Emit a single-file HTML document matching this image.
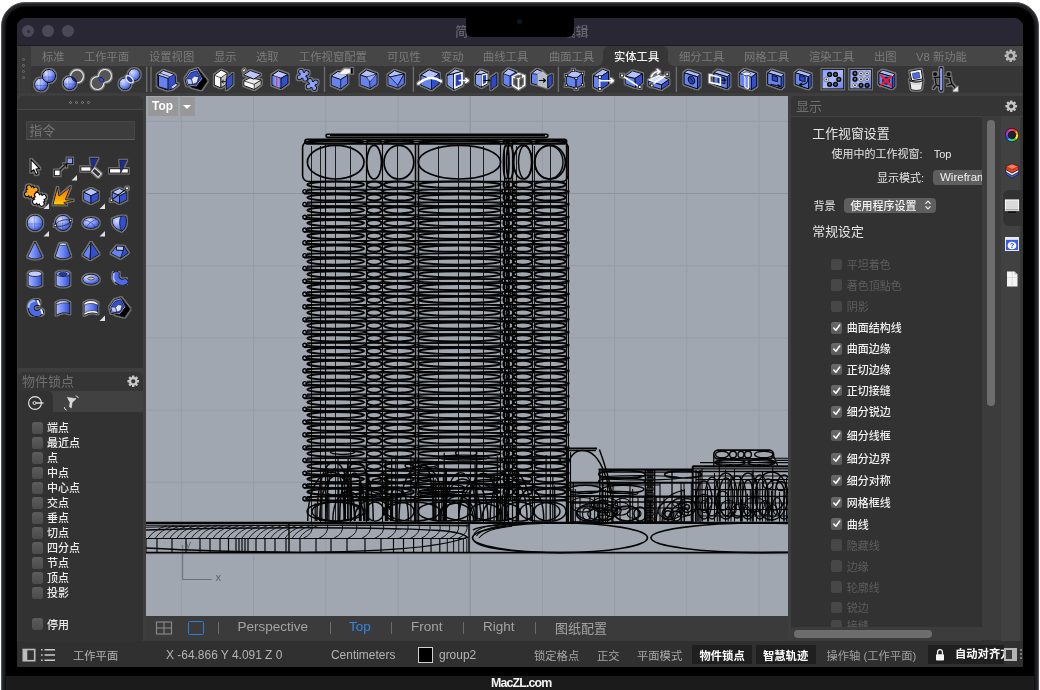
<!DOCTYPE html><html><head><meta charset="utf-8"><title>Rhino</title><style>
*{box-sizing:border-box}
html,body{margin:0;padding:0}
body{width:1040px;height:690px;background:#fff;position:relative;overflow:hidden;font-family:"Liberation Sans","Noto Sans CJK SC",sans-serif;}
.abs{position:absolute}
#bezel{position:absolute;left:1.4px;top:1.5px;width:1037.3px;height:720px;border-radius:24px;background:#000;border:1.2px solid #55565b;box-shadow:inset 0 0 0 1.3px #2c2d31,inset 0 0 0 3.6px #1b1c1f}
#chin{position:absolute;left:6px;top:675.8px;width:1027.6px;height:15px;background:#1b1b1b}
#screen{position:absolute;left:17px;top:18px;width:1006px;height:649px;border-radius:9px 9px 2px 2px;background:#3e3e3e;overflow:hidden;will-change:transform}
#screen .abs{position:absolute}
.t{position:absolute;white-space:nowrap;line-height:1}
</style></head><body><div id="bezel"></div><div id="chin"></div><div class="t" style="left:490.5px;top:675.5px;font-size:12.4px;line-height:14px;font-weight:bold;color:#f4f4f4;letter-spacing:-0.85px;will-change:transform">MacZL.com</div><div id="screen"><div class="abs " style="left:0px;top:0px;width:1006px;height:28px;background:#2a2735"></div>
<div class="abs " style="left:5px;top:7px;width:12px;height:12px;border-radius:50%;background:#4d4858"></div>
<div class="abs " style="left:25px;top:7px;width:12px;height:12px;border-radius:50%;background:#4d4858"></div>
<div class="abs " style="left:45px;top:7px;width:12px;height:12px;border-radius:50%;background:#4d4858"></div>
<div class="abs " style="left:9.5px;top:11.5px;width:3px;height:3px;border-radius:50%;background:#2f2b3a"></div>
<div class="t" style="left:438px;top:4.225px;font-size:13px;height:19.5px;line-height:19.5px;color:#66616f;font-weight:500">简</div>
<div class="t" style="left:545.6px;top:4.225px;font-size:13px;height:19.5px;line-height:19.5px;color:#66616f;font-weight:500">编辑</div>
<div class="abs " style="left:448.8px;top:0px;width:108.2px;height:18.9px;background:#000;border-radius:0 0 6px 6px"></div>
<div class="abs " style="left:499.5px;top:1px;width:5px;height:5px;border-radius:50%;background:#0c1626"></div>
<div class="abs " style="left:0px;top:28px;width:1006px;height:21px;background:#363636"></div>
<div class="abs " style="left:0px;top:28px;width:586px;height:20.2px;background:#464646;border-radius:0 0 6px 0"></div>
<div class="abs " style="left:651px;top:28px;width:355px;height:20.2px;background:#464646;border-radius:0 0 0 6px"></div>
<div class="abs " style="left:0px;top:48px;width:1006px;height:26.6px;background:#363636"></div>
<div class="abs " style="left:-1px;top:28px;width:14.5px;height:46.6px;background:#3a3a3a;border-radius:0 0 0 6px"></div>
<div class="abs " style="left:5.1px;top:40.1px;width:3px;height:3px;border-radius:50%;border:0.8px solid #747474"></div>
<div class="abs " style="left:5.1px;top:46.1px;width:3px;height:3px;border-radius:50%;border:0.8px solid #747474"></div>
<div class="abs " style="left:5.1px;top:52.1px;width:3px;height:3px;border-radius:50%;border:0.8px solid #747474"></div>
<div class="abs " style="left:5.1px;top:58.1px;width:3px;height:3px;border-radius:50%;border:0.8px solid #747474"></div>
<div class="abs " style="left:583px;top:28px;width:71px;height:6px;background:#464646"></div>
<div class="abs " style="left:586px;top:28.4px;width:65px;height:20px;background:#363636;border-radius:6px 6px 0 0"></div>
<div class="abs " style="left:0px;top:27.3px;width:1006px;height:1.2px;background:#1c1b22"></div>
<div class="t" style="left:25px;top:30.5725px;font-size:11.3px;height:16.95px;line-height:16.95px;color:#7b7b7b;">标准</div>
<div class="t" style="left:67px;top:30.5725px;font-size:11.3px;height:16.95px;line-height:16.95px;color:#7b7b7b;">工作平面</div>
<div class="t" style="left:132px;top:30.5725px;font-size:11.3px;height:16.95px;line-height:16.95px;color:#7b7b7b;">设置视图</div>
<div class="t" style="left:197px;top:30.5725px;font-size:11.3px;height:16.95px;line-height:16.95px;color:#7b7b7b;">显示</div>
<div class="t" style="left:239px;top:30.5725px;font-size:11.3px;height:16.95px;line-height:16.95px;color:#7b7b7b;">选取</div>
<div class="t" style="left:282px;top:30.5725px;font-size:11.3px;height:16.95px;line-height:16.95px;color:#7b7b7b;">工作视窗配置</div>
<div class="t" style="left:370px;top:30.5725px;font-size:11.3px;height:16.95px;line-height:16.95px;color:#7b7b7b;">可见性</div>
<div class="t" style="left:424px;top:30.5725px;font-size:11.3px;height:16.95px;line-height:16.95px;color:#7b7b7b;">变动</div>
<div class="t" style="left:466px;top:30.5725px;font-size:11.3px;height:16.95px;line-height:16.95px;color:#7b7b7b;">曲线工具</div>
<div class="t" style="left:532px;top:30.5725px;font-size:11.3px;height:16.95px;line-height:16.95px;color:#7b7b7b;">曲面工具</div>
<div class="t" style="left:597px;top:30.5725px;font-size:11.3px;height:16.95px;line-height:16.95px;color:#f2f2f2;font-weight:500;">实体工具</div>
<div class="t" style="left:662px;top:30.5725px;font-size:11.3px;height:16.95px;line-height:16.95px;color:#7b7b7b;">细分工具</div>
<div class="t" style="left:727px;top:30.5725px;font-size:11.3px;height:16.95px;line-height:16.95px;color:#7b7b7b;">网格工具</div>
<div class="t" style="left:792px;top:30.5725px;font-size:11.3px;height:16.95px;line-height:16.95px;color:#7b7b7b;">渲染工具</div>
<div class="t" style="left:857px;top:30.5725px;font-size:11.3px;height:16.95px;line-height:16.95px;color:#7b7b7b;">出图</div>
<div class="t" style="left:899px;top:30.5725px;font-size:11.3px;height:16.95px;line-height:16.95px;color:#7b7b7b;">V8 新功能</div>
<svg class="abs" style="left:985.75px;top:29.75px" width="15.5" height="15.5" viewBox="-10 -10 20 20"><rect x="-1.7" y="-8" width="3.4" height="4" rx=".6" fill="#b8b8b8" transform="rotate(0)"/><rect x="-1.7" y="-8" width="3.4" height="4" rx=".6" fill="#b8b8b8" transform="rotate(45)"/><rect x="-1.7" y="-8" width="3.4" height="4" rx=".6" fill="#b8b8b8" transform="rotate(90)"/><rect x="-1.7" y="-8" width="3.4" height="4" rx=".6" fill="#b8b8b8" transform="rotate(135)"/><rect x="-1.7" y="-8" width="3.4" height="4" rx=".6" fill="#b8b8b8" transform="rotate(180)"/><rect x="-1.7" y="-8" width="3.4" height="4" rx=".6" fill="#b8b8b8" transform="rotate(225)"/><rect x="-1.7" y="-8" width="3.4" height="4" rx=".6" fill="#b8b8b8" transform="rotate(270)"/><rect x="-1.7" y="-8" width="3.4" height="4" rx=".6" fill="#b8b8b8" transform="rotate(315)"/><circle r="4.4" fill="none" stroke="#b8b8b8" stroke-width="3"/></svg>
<svg class="abs" style="left:0;top:44px" width="1006" height="34" viewBox="17 62 1006 34"><defs>
<radialGradient id="gs" cx="35%" cy="30%" r="75%"><stop offset="0" stop-color="#d9e0ff"/><stop offset=".5" stop-color="#879dfa"/><stop offset="1" stop-color="#2c47cc"/></radialGradient>
<linearGradient id="gv" x1="0" y1="0" x2="0" y2="1"><stop offset="0" stop-color="#a9b9ff"/><stop offset="1" stop-color="#3a57db"/></linearGradient>
<linearGradient id="gh" x1="0" y1="0" x2="1" y2="0"><stop offset="0" stop-color="#a9b9ff"/><stop offset=".5" stop-color="#6c87f4"/><stop offset="1" stop-color="#2f4acb"/></linearGradient>
<linearGradient id="gv2" x1="0" y1="0" x2="1" y2="1"><stop offset="0" stop-color="#7f97fb"/><stop offset=".5" stop-color="#aebcff"/><stop offset="1" stop-color="#5f7df3"/></linearGradient><linearGradient id="go" x1="0" y1="0" x2="0" y2="1"><stop offset="0" stop-color="#ff5a00"/><stop offset=".55" stop-color="#ff9a00"/><stop offset="1" stop-color="#ffd000"/></linearGradient>
<filter id="halo" x="-20%" y="-20%" width="140%" height="140%"><feMorphology in="SourceAlpha" operator="dilate" radius="0.9" result="d"/><feGaussianBlur in="d" stdDeviation="0.35" result="b"/><feFlood flood-color="#8a8a8a" flood-opacity=".75"/><feComposite in2="b" operator="in" result="h"/><feMerge><feMergeNode in="h"/><feMergeNode in="SourceGraphic"/></feMerge></filter>
</defs><path d="M146.8 66.5V92" stroke="#777" stroke-width="1.2"/><path d="M151 66.5V92" stroke="#777" stroke-width="1.2"/><path d="M324.5 66.5V92" stroke="#6c6c6c" stroke-width="1.4"/><path d="M413.4 66.5V92" stroke="#6c6c6c" stroke-width="1.4"/><path d="M558.4 66.5V92" stroke="#6c6c6c" stroke-width="1.4"/><path d="M676.4 66.5V92" stroke="#6c6c6c" stroke-width="1.4"/><g transform="translate(45 79.3)" filter="url(#halo)"><circle cx="-3.9" cy="5.2" r="6.6" fill="url(#gs)" stroke="#0d0d0d" stroke-width="1"/><path d="M-4.9 -0.4V10.8M-9.5 6.2H1.7" stroke="#22379c" stroke-width=".7" opacity=".55" fill="none"/><path d="M-5.7 0.1V9.8" stroke="#e6ebff" stroke-width=".6" opacity=".7" fill="none"/><circle cx="4" cy="-3.3" r="6.6" fill="url(#gs)" stroke="#0d0d0d" stroke-width="1"/><path d="M3 -8.9V2.3M-1.6 -2.3H9.6" stroke="#22379c" stroke-width=".7" opacity=".55" fill="none"/><path d="M2.2 -8.4V1.3" stroke="#e6ebff" stroke-width=".6" opacity=".7" fill="none"/></g><g transform="translate(73 79.3)" filter="url(#halo)"><circle cx="4" cy="-3" r="6.4" fill="#555" stroke="#e8e8e8" stroke-width="1.1"/><circle cx="-3.2" cy="3.8" r="6.6" fill="url(#gs)" stroke="#0d0d0d" stroke-width="1"/><path d="M-4.2 -1.8V9.4M-8.8 4.8H2.4" stroke="#22379c" stroke-width=".7" opacity=".55" fill="none"/><path d="M-5 -1.3V8.4" stroke="#e6ebff" stroke-width=".6" opacity=".7" fill="none"/><path d="M-1.5 -2.3A6.6 6.6 0 0 1 3.3 2.6A6.4 6.4 0 0 1 -1.5 -2.3Z" fill="#2138a8" stroke="#0d0d0d" stroke-width=".7"/></g><g transform="translate(101.2 79.3)" filter="url(#halo)"><circle cx="-3.8" cy="3.8" r="6.4" fill="#555" stroke="#e8e8e8" stroke-width="1.1"/><circle cx="3.8" cy="-3.4" r="6.4" fill="#555" stroke="#e8e8e8" stroke-width="1.1"/><path d="M-2.6 -2.2C1 -2.6 3.2 0 2.8 2.9C-.6 3 -3 .8 -2.6 -2.2Z" fill="#3350d2" stroke="#0d0d0d" stroke-width=".7"/></g><g transform="translate(129.6 79.3)" filter="url(#halo)"><circle cx="-4.6" cy="4.6" r="6" fill="url(#gs)" stroke="#0d0d0d" stroke-width="1"/><circle cx="4.6" cy="-4.6" r="6" fill="url(#gs)" stroke="#0d0d0d" stroke-width="1"/><ellipse cx="0" cy="0" rx="4.4" ry="2.6" transform="rotate(45)" fill="#2138a8" stroke="#f0f0f0" stroke-width="1.3"/></g><g transform="translate(166.9 79.3)" filter="url(#halo)"><path d="M-9.7 -4.5 L-3.6 -8.8 L7.2 -4.9 L8.5 -3.2 L8.5 3.3 L11.5 5 L5.4 9.8 L0.7 11 L-8.4 7.6 L-9.7 6.3 Z" fill="#3350d2" stroke="#0d0d0d" stroke-width="1" stroke-linejoin="round" /><path d="M-8.4 -4.5 L1.1 -1 L1.1 10.2 L-8.4 7.4 Z" fill="#6683f2" stroke="#0d0d0d" stroke-width="1" stroke-linejoin="round" /><path d="M-9.7 -4.5 L-3.6 -8.8 L7.2 -4.9 L1.1 -1 Z" fill="#c3ceff" stroke="#0d0d0d" stroke-width="0.8" stroke-linejoin="round" /><path d="M3.7 7.6 L8.5 4.2 L11.5 5.3 L5.9 9.6 Z" fill="#c3ceff" stroke="#0d0d0d" stroke-width="0.7" stroke-linejoin="round" /><path d="M-6.5 -6L2.5 -2.8" fill="none" stroke="#0d0d0d" stroke-width="0.7" stroke-linecap="round" stroke-linejoin="round" /></g><g transform="translate(195.8 79.3)" filter="url(#halo)"><path d="M1.6 -11 L11.6 1.6 L5.5 10.6 L-4.4 8 Z" fill="#000" stroke="#000" stroke-width="1" stroke-linejoin="round" /><path d="M-10.9 -0.6 L-5.7 -8.4 L1.6 -10.5 L6.8 -0.6 L0.3 7.6 L-9.2 6.3 Z" fill="#9db0ff" stroke="#0d0d0d" stroke-width="1" stroke-linejoin="round" /><path d="M-9.2 -0.6 L-4.8 -6.7 L1.2 -8.4 L5.1 -1 L-0.1 5.9 L-7.9 5 Z" fill="#3350d2" stroke="#0d0d0d" stroke-width="0.7" stroke-linejoin="round" /><path d="M-4.4 -0.2 L-1.4 -3.2 L2.9 -2.3 L1.2 3.3 L-3.1 5 Z" fill="#dfe4f6" stroke="#0d0d0d" stroke-width="0.6" stroke-linejoin="round" /><path d="M-7.9 5 L-9.2 -0.6 L-4.4 -0.2 L-3.1 5 Z" fill="#b8c5ff" stroke="#0d0d0d" stroke-width="0.5" stroke-linejoin="round" /></g><g transform="translate(224 79.3)" filter="url(#halo)"><path d="M-9.7 -4.1 L-2.8 -9.3 L3.3 -6.2 L2.4 5 L-3.2 8.5 L-9.7 5.9 Z" fill="#fafafa" stroke="#0d0d0d" stroke-width="1" stroke-linejoin="round" /><path d="M-3.2 -1.5 L2.9 -5.8 L2.4 5 L-3.2 8.5 Z" fill="#c4c4c4" stroke="#0d0d0d" stroke-width="0.7" stroke-linejoin="round" /><path d="M2.2 -0.2 L8.9 -6.2 L8.9 5 L2.4 10.6 Z" fill="#3350d2" stroke="#0d0d0d" stroke-width="1" stroke-linejoin="round" /><path d="M-3.2 -1.5V8.5M-9.7 -4.1L-3.2 -1.5" fill="none" stroke="#0d0d0d" stroke-width="0.7" stroke-linecap="round" stroke-linejoin="round" /><path d="M1.5 2.4H-2M-.6 1L-2.2 2.4L-.6 3.8" fill="none" stroke="#0d0d0d" stroke-width="1" stroke-linecap="round" stroke-linejoin="round" /></g><g transform="translate(251.6 79.3)" filter="url(#halo)"><path d="M-7.8 1.6 L-1.3 -1.5 L9.5 0.7 L9.5 5.4 L2.6 10.2 L-7.8 6.3 Z" fill="#fbfbfb" stroke="#0d0d0d" stroke-width="1" stroke-linejoin="round" /><path d="M2.6 5 L9.5 0.7 L9.5 5.4 L2.6 10.2 Z" fill="#c9c9c9" stroke="#0d0d0d" stroke-width="0.7" stroke-linejoin="round" /><path d="M-7.8 1.6 L-1.3 -1.5 L9.5 0.7 L2.6 5 Z" fill="#e9e9e9" stroke="#0d0d0d" stroke-width="0.7" stroke-linejoin="round" /><path d="M-8.2 -4.5 L-1.3 -8.8 L9.5 -4.9 L2.2 -0.2 Z" fill="#b9c6ff" stroke="#0d0d0d" stroke-width="1" stroke-linejoin="round" /><path d="M-9 -9.2l2.2 -1.6l.8 2.8l-1.6 -.2l-.6 1.4z" fill="#fff" stroke="#0d0d0d" stroke-width=".5"/></g><g transform="translate(279.3 79.3)" filter="url(#halo)"><path d="M-7.4 -4.1 L-0.9 -8.4 L8.7 -4.9 L8.7 4.2 L1.7 9.3 L-7.4 5.9 Z" fill="#6683f2" stroke="#0d0d0d" stroke-width="1" stroke-linejoin="round" /><path d="M-7.4 -4.1 L-0.9 -8.4 L8.7 -4.9 L1.7 -1 Z" fill="#bcc8ff" stroke="#0d0d0d" stroke-width="1" stroke-linejoin="round" /><path d="M1.7 -1 L8.7 -4.9 L8.7 4.2 L1.7 9.3 Z" fill="#3350d2" stroke="#0d0d0d" stroke-width="1" stroke-linejoin="round" /><path d="M-5 -3.2L0 -1.5V8.6L-5 6.8z" fill="#8ea4fb" opacity=".7"/><path d="M-2.6 -2.3V7.6" fill="none" stroke="#e23070" stroke-width="1.2" stroke-linecap="round" stroke-linejoin="round" /></g><g transform="translate(307.5 79.3)" filter="url(#halo)"><g transform="translate(-4.4 -4.1) rotate(14)"><circle cx="-3" cy="-3" r="1.9" fill="#0d0d0d" stroke="#0d0d0d" stroke-width="1.9"/><circle cx="3" cy="-3" r="1.9" fill="#0d0d0d" stroke="#0d0d0d" stroke-width="1.9"/><circle cx="-3" cy="3" r="1.9" fill="#0d0d0d" stroke="#0d0d0d" stroke-width="1.9"/><circle cx="3" cy="3" r="1.9" fill="#0d0d0d" stroke="#0d0d0d" stroke-width="1.9"/><circle r="2.5" fill="#0d0d0d" stroke="#0d0d0d" stroke-width="1.9"/><path d="M0 0L-3 -3" stroke="#0d0d0d" stroke-width="4.2"/><path d="M0 0L3 -3" stroke="#0d0d0d" stroke-width="4.2"/><path d="M0 0L-3 3" stroke="#0d0d0d" stroke-width="4.2"/><path d="M0 0L3 3" stroke="#0d0d0d" stroke-width="4.2"/><path d="M0 0L-3 -3" stroke="#8199fb" stroke-width="2.4"/><path d="M0 0L3 -3" stroke="#8199fb" stroke-width="2.4"/><path d="M0 0L-3 3" stroke="#8199fb" stroke-width="2.4"/><path d="M0 0L3 3" stroke="#8199fb" stroke-width="2.4"/><circle cx="-3" cy="-3" r="1.9" fill="#8199fb"/><circle cx="3" cy="-3" r="1.9" fill="#8199fb"/><circle cx="-3" cy="3" r="1.9" fill="#8199fb"/><circle cx="3" cy="3" r="1.9" fill="#8199fb"/><circle r="2.6" fill="#93a8fd"/></g><g transform="translate(4.7 5.2) rotate(14)"><circle cx="-3" cy="-3" r="1.9" fill="#0d0d0d" stroke="#0d0d0d" stroke-width="1.9"/><circle cx="3" cy="-3" r="1.9" fill="#0d0d0d" stroke="#0d0d0d" stroke-width="1.9"/><circle cx="-3" cy="3" r="1.9" fill="#0d0d0d" stroke="#0d0d0d" stroke-width="1.9"/><circle cx="3" cy="3" r="1.9" fill="#0d0d0d" stroke="#0d0d0d" stroke-width="1.9"/><circle r="2.5" fill="#0d0d0d" stroke="#0d0d0d" stroke-width="1.9"/><path d="M0 0L-3 -3" stroke="#0d0d0d" stroke-width="4.2"/><path d="M0 0L3 -3" stroke="#0d0d0d" stroke-width="4.2"/><path d="M0 0L-3 3" stroke="#0d0d0d" stroke-width="4.2"/><path d="M0 0L3 3" stroke="#0d0d0d" stroke-width="4.2"/><path d="M0 0L-3 -3" stroke="#8199fb" stroke-width="2.4"/><path d="M0 0L3 -3" stroke="#8199fb" stroke-width="2.4"/><path d="M0 0L-3 3" stroke="#8199fb" stroke-width="2.4"/><path d="M0 0L3 3" stroke="#8199fb" stroke-width="2.4"/><circle cx="-3" cy="-3" r="1.9" fill="#8199fb"/><circle cx="3" cy="-3" r="1.9" fill="#8199fb"/><circle cx="-3" cy="3" r="1.9" fill="#8199fb"/><circle cx="3" cy="3" r="1.9" fill="#8199fb"/><circle r="2.6" fill="#93a8fd"/></g></g><g transform="translate(341 79.3)" filter="url(#halo)"><path d="M-9.8 -3.2 L-2.9 -8 L6.7 -4.1 L6.7 4.2 L-0.3 9.8 L-9.8 5.9 Z" fill="#6683f2" stroke="#0d0d0d" stroke-width="1" stroke-linejoin="round" /><path d="M-9.8 -3.2 L-2.9 -8 L6.7 -4.1 L-0.3 0.2 Z" fill="#b3c1ff" stroke="#0d0d0d" stroke-width="1" stroke-linejoin="round" /><path d="M-0.3 0.2 L6.7 -4.1 L6.7 4.2 L-0.3 9.8 Z" fill="#5876ea" stroke="#0d0d0d" stroke-width="0.8" stroke-linejoin="round" /><path d="M-3 -5 L3.6 -10.6 L10 -10.2 L10 -6.6 L4.2 -4.6 Z" fill="#f4f4f4" stroke="#999" stroke-width="0.6" stroke-linejoin="round" /><path d="M10 -11.2 L11.9 -11.2 L11.9 -5.8 L10 -5.8 Z" fill="#000" stroke="#0d0d0d" stroke-width="0.6" stroke-linejoin="round" /></g><g transform="translate(368.7 79.3)" filter="url(#halo)"><path d="M-8.6 -4.5 L-2.1 -9.3 L8.3 -5.4 L8.3 4.6 L1.4 9.3 L-8.6 5.4 Z" fill="#6683f2" stroke="#0d0d0d" stroke-width="1" stroke-linejoin="round" /><path d="M-8.6 -4.5 L-2.1 -9.3 L8.3 -5.4 L0.6 -1.4 Z" fill="#b3c1ff" stroke="#0d0d0d" stroke-width="1" stroke-linejoin="round" /><path d="M0.6 -1.4 L8.3 -5.4 L8.3 4.6 L1.4 9.3 Z" fill="#5876ea" stroke="#0d0d0d" stroke-width="0.8" stroke-linejoin="round" /><path d="M-2.1 -2.4L8.3 -5.4L1.4 2.5Q-1.5 -.5 -2.1 -2.4z" fill="#98abfc" stroke="#0d0d0d" stroke-width=".6"/></g><g transform="translate(396 79.3)" filter="url(#halo)"><path d="M-8.1 -4.1 L-1.6 -8.8 L8.3 -5.4 L8.3 4.2 L1.8 8.9 L-8.1 5.4 Z" fill="#6683f2" stroke="#0d0d0d" stroke-width="1" stroke-linejoin="round" /><path d="M-8.1 -4.1 L-1.6 -8.8 L8.3 -5.4 L-5.9 -2.3 Z" fill="#b3c1ff" stroke="#0d0d0d" stroke-width="1" stroke-linejoin="round" /><path d="M-5.9 -2.3 L8.3 -5.4 L1.8 6 Z" fill="#7d95f8" stroke="#0d0d0d" stroke-width="0.7" stroke-linejoin="round" /><path d="M8.3 -5.4 L8.3 4.2 L1.8 8.9 L1.8 6 Z" fill="#5876ea" stroke="#0d0d0d" stroke-width="0.7" stroke-linejoin="round" /></g><g transform="translate(430 79.3)" filter="url(#halo)"><path d="M-9.2 -4.2 L-0.8 -9.5 L9.2 -5.7 L9.2 4.3 L1.5 10.5 L-9.2 5.8 Z" fill="#6683f2" stroke="#0d0d0d" stroke-width="1" stroke-linejoin="round" /><path d="M-9.2 -4.2 L-0.8 -9.5 L9.2 -5.7 L1.5 0 Z" fill="#b3c1ff" stroke="#0d0d0d" stroke-width="1" stroke-linejoin="round" /><path d="M1.5 0 L9.2 -5.7 L9.2 4.3 L1.5 10.5 Z" fill="#3350d2" stroke="#0d0d0d" stroke-width="0.8" stroke-linejoin="round" /><path d="M-11.5 4.3Q0 -5.5 10.8 2" fill="none" stroke="#fff" stroke-width="2.4" stroke-linecap="round" stroke-linejoin="round" /></g><g transform="translate(458 79.3)" filter="url(#halo)"><path d="M-11 -4.2 L-4.2 -5.7 L-4.2 10.3 L-11 5.8 Z" fill="#86a0fb" stroke="#0d0d0d" stroke-width="1" stroke-linejoin="round" /><path d="M-11 -4.2 L-2.6 -10.3 L5 -8 L-4.2 -5.7 Z" fill="#c0cbff" stroke="#0d0d0d" stroke-width="1" stroke-linejoin="round" /><path d="M-4.2 -5.7 L5 -8 L5 6 L-4.2 10.3 Z" fill="#3350d2" stroke="#0d0d0d" stroke-width="1" stroke-linejoin="round" /><path d="M-3.2 -4.6 L4 -6.6 L4 5.2 L-3.2 8.6 Z" fill="#2a43bd" stroke="#fff" stroke-width="1.7" stroke-linejoin="round" /><path d="M1.2 1.2H10M7.8 -.9L10.3 1.2L7.8 3.3" fill="none" stroke="#fff" stroke-width="1.3" stroke-linecap="round" stroke-linejoin="round" /></g><g transform="translate(486 79.3)" filter="url(#halo)"><path d="M-10.6 -5 L-4.5 -5 L-4.5 8.2 L-10.6 5 Z" fill="#86a0fb" stroke="#0d0d0d" stroke-width="1" stroke-linejoin="round" /><path d="M-10.6 -5 L-5.2 -9.5 L1.7 -6.5 L-4.5 -5 Z" fill="#c0cbff" stroke="#0d0d0d" stroke-width="1" stroke-linejoin="round" /><path d="M-4.5 -5 L1.7 -6.5 L1.7 4.3 L-4.5 8.2 Z" fill="#3350d2" stroke="#0d0d0d" stroke-width="1" stroke-linejoin="round" /><path d="M-3.8 -4.2 L0.9 -5.4 L0.9 3.6 L-3.8 6.2 Z" fill="#2a43bd" stroke="#fff" stroke-width="1.4" stroke-linejoin="round" /><path d="M4.8 -1.8 L11 -5.7 L11 5.8 L4.8 10.5 Z" fill="#2d47c6" stroke="#0d0d0d" stroke-width="1" stroke-linejoin="round" /><path d="M-2.2 1.2H4M2.2 -.4L4.2 1.2L2.2 2.8" fill="none" stroke="#0d0d0d" stroke-width="1.1" stroke-linecap="round" stroke-linejoin="round" /></g><g transform="translate(514 79.3)" filter="url(#halo)"><path d="M-11 -5.7 L-5.5 -10.3 L2.2 -7.2 L2.2 -4.2 L-1.7 -2.6 L-1.7 5.8 L-5.5 7.4 L-11 4.3 Z" fill="#6683f2" stroke="#0d0d0d" stroke-width="1" stroke-linejoin="round" /><path d="M-11 -5.7 L-5.5 -10.3 L2.2 -7.2 L-4 -3.2 Z" fill="#b3c1ff" stroke="#0d0d0d" stroke-width="0.8" stroke-linejoin="round" /><path d="M-4 -3.2 L2.2 -7.2 L2.2 -4.2 L-1.7 -2.6 L-1.7 5.8 L-4 7 Z" fill="#3350d2" stroke="#0d0d0d" stroke-width="0.7" stroke-linejoin="round" /><path d="M-1.7 -2.6 L4.5 -5.7 L10.6 -3.4 L10.6 5.8 L4.5 9.7 L-1.7 5.8 Z" fill="none" stroke="#fff" stroke-width="1.3" stroke-linejoin="round" /><path d="M-1.7 -2.6L4.5 -.3L10.6 -3.4M4.5 -.3V9.7" fill="none" stroke="#fff" stroke-width="1.2" stroke-linecap="round" stroke-linejoin="round" /><path d="M2 -2V6.5M7 -4.5V7.5" fill="none" stroke="#0d0d0d" stroke-width="0.9" stroke-linecap="round" stroke-linejoin="round" /></g><g transform="translate(542 79.3)" filter="url(#halo)"><path d="M-10.5 -5.7 L-5 -9.9 L0.3 -7.7 L-4.3 -5 L-4.3 5.8 L-10.5 4.2 Z" fill="#6683f2" stroke="#0d0d0d" stroke-width="1" stroke-linejoin="round" /><path d="M-10.5 -5.7 L-5 -9.9 L0.3 -7.7 L-4.3 -5 Z" fill="#b3c1ff" stroke="#0d0d0d" stroke-width="0.8" stroke-linejoin="round" /><path d="M-4.3 -5 L0.3 -7.7 L5.7 -2.7 L5.7 8.6 L-3.5 5.8 L-4.3 5.8 Z" fill="#b8bcc8" stroke="#ddd" stroke-width="0.6" stroke-linejoin="round" /><path d="M5.7 -2.7 L10.3 -5 L10.3 5 L5.7 8.9 Z" fill="#2d47c6" stroke="#0d0d0d" stroke-width="1" stroke-linejoin="round" /><path d="M-2.7 1.2H3.4M1.4 -.5L3.6 1.2L1.4 2.9" fill="none" stroke="#0d0d0d" stroke-width="1.2" stroke-linecap="round" stroke-linejoin="round" /></g><g transform="translate(574.5 79.3)" filter="url(#halo)"><path d="M-8.2 -3.8 L1.6 -0.9 L1.6 8.9 L-8.2 6 Z" fill="#6683f2" stroke="#0d0d0d" stroke-width="1" stroke-linejoin="round" /><path d="M1.6 -0.9 L8 -6 L8 5.5 L1.6 8.9 Z" fill="#5876ea" stroke="#0d0d0d" stroke-width="1" stroke-linejoin="round" /><path d="M-8.2 -3.8 L-1.2 -9 L8 -6 L1.6 -0.9 Z" fill="#b3c1ff" stroke="#0d0d0d" stroke-width="1" stroke-linejoin="round" /><rect x="-2.35" y="-10.15" width="2.3" height="2.3" fill="#fff" stroke="#0d0d0d" stroke-width=".8"/><rect x="6.85" y="-7.15" width="2.3" height="2.3" fill="#fff" stroke="#0d0d0d" stroke-width=".8"/><rect x="-9.35" y="-4.95" width="2.3" height="2.3" fill="#fff" stroke="#0d0d0d" stroke-width=".8"/><rect x="0.45" y="-2.05" width="2.3" height="2.3" fill="#fff" stroke="#0d0d0d" stroke-width=".8"/><rect x="6.85" y="4.35" width="2.3" height="2.3" fill="#fff" stroke="#0d0d0d" stroke-width=".8"/><rect x="-9.35" y="4.85" width="2.3" height="2.3" fill="#fff" stroke="#0d0d0d" stroke-width=".8"/><rect x="0.45" y="7.75" width="2.3" height="2.3" fill="#fff" stroke="#0d0d0d" stroke-width=".8"/></g><g transform="translate(603 79.3)" filter="url(#halo)"><path d="M-9.5 -3.8 L-3.2 -2 L-3.2 10.7 L-9.5 7.8 Z" fill="#6683f2" stroke="#0d0d0d" stroke-width="1" stroke-linejoin="round" /><path d="M-9.5 -3.8 L-0.3 -10.1 L5.5 -7.8 L-3.2 -2 Z" fill="#b3c1ff" stroke="#0d0d0d" stroke-width="1" stroke-linejoin="round" /><path d="M-3.2 -2 L5.5 -7.8 L5.5 4.9 L-3.2 10.7 Z" fill="#3350d2" stroke="#0d0d0d" stroke-width="1" stroke-linejoin="round" /><path d="M-3.2 -2V9.5M-3.2 1.4H10M7.8 -.7L10.3 1.4L7.8 3.5" fill="none" stroke="#fff" stroke-width="1.4" stroke-linecap="round" stroke-linejoin="round" /><rect x="-4.6" y="-3.6" width="2.8" height="2.8" fill="#fff" stroke="#0d0d0d" stroke-width=".8"/><rect x="-4.6" y="8.2" width="2.8" height="2.8" fill="#fff" stroke="#0d0d0d" stroke-width=".8"/></g><g transform="translate(631 79.3)" filter="url(#halo)"><path d="M-5.8 -3.2 L4 -0.9 L4.6 8.4 L-5.8 4.3 Z" fill="#6683f2" stroke="#0d0d0d" stroke-width="1" stroke-linejoin="round" /><path d="M-5.8 -3.2 L1.7 -8.4 L11.5 -5.5 L4 -0.9 Z" fill="#b3c1ff" stroke="#0d0d0d" stroke-width="1" stroke-linejoin="round" /><path d="M4 -0.9 L11.5 -5.5 L11.5 3.7 L4.6 8.4 Z" fill="#3350d2" stroke="#0d0d0d" stroke-width="1" stroke-linejoin="round" /><path d="M-9 -3.8L8.7 7.8" fill="none" stroke="#fff" stroke-width="1.7" stroke-linecap="round" stroke-linejoin="round" /><rect x="-10.4" y="-5.2" width="2.8" height="2.8" fill="#fff" stroke="#0d0d0d" stroke-width=".8"/><rect x="7.3" y="6.4" width="2.8" height="2.8" fill="#fff" stroke="#0d0d0d" stroke-width=".8"/></g><g transform="translate(659 79.3)" filter="url(#halo)"><path d="M-10.7 1.4 L2.5 5.5 L2.5 10.1 L-10.7 6 Z" fill="#6683f2" stroke="#0d0d0d" stroke-width="1" stroke-linejoin="round" /><path d="M-10.7 1.4 L0.2 -4.3 L10 0.3 L2.5 5.5 Z" fill="#9fb2fd" stroke="#0d0d0d" stroke-width="1" stroke-linejoin="round" /><path d="M2.5 5.5 L10 0.3 L10 4.9 L2.5 10.1 Z" fill="#3350d2" stroke="#0d0d0d" stroke-width="1" stroke-linejoin="round" /><path d="M-10.2 0.8 L-0.4 -3.8 L4.8 -2.1 L-5 3 Z" fill="#d5dcff" stroke="#fff" stroke-width="1.1" stroke-linejoin="round" /><path d="M-7.3 6L8.3 -4.9" fill="none" stroke="#fff" stroke-width="1.3" stroke-linecap="round" stroke-linejoin="round" /><path d="M-7.8 -2.6Q-5 -8.5 .5 -7.6M-1.8 -9.7L.9 -7.5L-1.6 -5.6" fill="none" stroke="#fff" stroke-width="1.4" stroke-linecap="round" stroke-linejoin="round" /><rect x="6.9" y="-6.4" width="2.8" height="2.8" fill="#fff" stroke="#0d0d0d" stroke-width=".8"/><rect x="-8.7" y="4.8" width="2.8" height="2.8" fill="#fff" stroke="#0d0d0d" stroke-width=".8"/></g><g transform="translate(692.4 79.3)" filter="url(#halo)"><path d="M-8.3 -6.5 L-4.3 -9.2 L7.8 -5.2 L7.8 6.9 L5.1 9.6 L-8.3 4.9 Z" fill="#3350d2" stroke="#0d0d0d" stroke-width="1" stroke-linejoin="round" /><path d="M-8.3 -6.5 L-4.3 -9.2 L7.8 -5.2 L5.1 -2.5 Z" fill="#aebdff" stroke="#0d0d0d" stroke-width="0.8" stroke-linejoin="round" /><path d="M-8.3 -6.5 L5.1 -2.5 L5.1 9.6 L-8.3 4.9 Z" fill="#6683f2" stroke="#0d0d0d" stroke-width="1" stroke-linejoin="round" /><ellipse cx="-.9" cy=".8" rx="3" ry="4" transform="rotate(-25 -.9 .8)" fill="#2c46c4" stroke="#0d0d0d" stroke-width=".9"/><path d="M-2.5 -1.8L1.2 3.2" stroke="#0d0d0d" stroke-width=".7"/></g><g transform="translate(720 79.3)" filter="url(#halo)"><path d="M-6.1 -6.5 L-2.1 -9.2 L10 -5.2 L10 6.9 L7.3 9.6 L-6.1 4.9 Z" fill="#3350d2" stroke="#0d0d0d" stroke-width="1" stroke-linejoin="round" /><path d="M-6.1 -6.5 L-2.1 -9.2 L10 -5.2 L7.3 -2.5 Z" fill="#aebdff" stroke="#0d0d0d" stroke-width="0.8" stroke-linejoin="round" /><path d="M-6.1 -6.5 L7.3 -2.5 L7.3 9.6 L-6.1 4.9 Z" fill="#6683f2" stroke="#0d0d0d" stroke-width="1" stroke-linejoin="round" /><path d="M-2 -3.2 L5 -1.2 L5 4.6 L-2 2.8 Z" fill="#2c46c4" stroke="#0d0d0d" stroke-width="0.8" stroke-linejoin="round" /><path d="M.4 .8H6" fill="none" stroke="#0d0d0d" stroke-width="1.2" stroke-linecap="round" stroke-linejoin="round" /><path d="M-10.4 -4.5 L0.4 -1.8 L0.4 5.6 L-10.4 2.9 Z" fill="none" stroke="#fff" stroke-width="1.6" stroke-linejoin="round" /></g><g transform="translate(748 79.3)" filter="url(#halo)"><path d="M-8.7 -5.9 L-3.4 -9.9 L8.7 -5.9 L8.7 6.9 L3.4 10.3 L-8.7 6.2 Z" fill="#6683f2" stroke="#0d0d0d" stroke-width="1" stroke-linejoin="round" /><path d="M-8.7 -5.9 L-3.4 -9.9 L8.7 -5.9 L3.4 -2.2 Z" fill="#aebdff" stroke="#0d0d0d" stroke-width="1" stroke-linejoin="round" /><path d="M3.4 -2.2 L8.7 -5.9 L8.7 6.9 L3.4 10.3 Z" fill="#3350d2" stroke="#0d0d0d" stroke-width="1" stroke-linejoin="round" /><path d="M-5.3 -5.4Q-1.3 -8 2.8 -5.2Q.4 -3 .4 -1V9.4L-3.1 8.2V-1Q-3.1 -3.2 -5.3 -5.4z" fill="#7990f0" stroke="#fff" stroke-width="1"/><ellipse cx="-1.3" cy="-5.5" rx="4" ry="1.9" fill="#e6ebff" stroke="#0d0d0d" stroke-width=".6"/></g><g transform="translate(776 79.3)" filter="url(#halo)"><path d="M-8.3 -6.5 L-4.3 -9.2 L7.8 -5.2 L7.8 6.9 L5.1 9.6 L-8.3 4.9 Z" fill="#3350d2" stroke="#0d0d0d" stroke-width="1" stroke-linejoin="round" /><path d="M-8.3 -6.5 L-4.3 -9.2 L7.8 -5.2 L5.1 -2.5 Z" fill="#aebdff" stroke="#0d0d0d" stroke-width="0.8" stroke-linejoin="round" /><path d="M-8.3 -6.5 L5.1 -2.5 L5.1 9.6 L-8.3 4.9 Z" fill="#6683f2" stroke="#0d0d0d" stroke-width="1" stroke-linejoin="round" /><path d="M-3.8 -3.9 L1.6 -2.3 L1.6 2.5 L-3.8 1 Z" fill="#2c46c4" stroke="#0d0d0d" stroke-width="0.9" stroke-linejoin="round" /><path d="M-5.1 4.9L4.3 7.2M2 5.3L4.5 7.2L1.6 8.2" fill="none" stroke="#0d0d0d" stroke-width="1.1" stroke-linecap="round" stroke-linejoin="round" /></g><g transform="translate(803.5 79.3)" filter="url(#halo)"><path d="M-8.3 -6.5 L-4.3 -9.2 L7.8 -5.2 L7.8 6.9 L5.1 9.6 L-8.3 4.9 Z" fill="#3350d2" stroke="#0d0d0d" stroke-width="1" stroke-linejoin="round" /><path d="M-8.3 -6.5 L-4.3 -9.2 L7.8 -5.2 L5.1 -2.5 Z" fill="#aebdff" stroke="#0d0d0d" stroke-width="0.8" stroke-linejoin="round" /><path d="M-8.3 -6.5 L5.1 -2.5 L5.1 9.6 L-8.3 4.9 Z" fill="#6683f2" stroke="#0d0d0d" stroke-width="1" stroke-linejoin="round" /><path d="M-3.8 -3.9 L1.6 -2.3 L1.6 2.5 L-3.8 1 Z" fill="#2c46c4" stroke="#0d0d0d" stroke-width="0.9" stroke-linejoin="round" /><path d="M4.4 -1.2Q5.2 5.6 -3.6 5.4M-1.4 3.6L-3.9 5.4L-1.6 7.2" fill="none" stroke="#0d0d0d" stroke-width="1.1" stroke-linecap="round" stroke-linejoin="round" /></g><g transform="translate(832.7 79.3)" filter="url(#halo)"><rect x="-10.7" y="-9.9" width="21.6" height="19.5" fill="url(#gv2)" stroke="#0d0d0d" stroke-width="1"/><circle cx="-3.1" cy="-4.9" r="2.6" fill="#0c0c0c"/><circle cx="-3.1" cy="-4.9" r="1.15" fill="#6a6a6a"/><circle cx="2.8" cy="-4.9" r="2.6" fill="#0c0c0c"/><circle cx="2.8" cy="-4.9" r="1.15" fill="#6a6a6a"/><circle cx="-6.4" cy="0.1" r="2.3" fill="#f2f2f2" stroke="#222" stroke-width=".5"/><circle cx="-6.4" cy="0.1" r=".95" fill="#2a2a2a"/><circle cx="6.1" cy="0.1" r="2.6" fill="#0c0c0c"/><circle cx="6.1" cy="0.1" r="1.15" fill="#6a6a6a"/><circle cx="-3.1" cy="5" r="2.6" fill="#0c0c0c"/><circle cx="-3.1" cy="5" r="1.15" fill="#6a6a6a"/><circle cx="2.8" cy="5" r="2.6" fill="#0c0c0c"/><circle cx="2.8" cy="5" r="1.15" fill="#6a6a6a"/></g><g transform="translate(860.5 79.3)" filter="url(#halo)"><rect x="-10.7" y="-9.9" width="21.6" height="19.5" fill="url(#gv2)" stroke="#0d0d0d" stroke-width="1"/><circle cx="-5.5" cy="-5.9" r="2.6" fill="#0c0c0c"/><circle cx="-5.5" cy="-5.9" r="1.15" fill="#6a6a6a"/><circle cx="0.5" cy="-5.9" r="2.3" fill="#f2f2f2" stroke="#222" stroke-width=".5"/><circle cx="0.5" cy="-5.9" r=".95" fill="#2a2a2a"/><circle cx="6.6" cy="-5.9" r="2.3" fill="#f2f2f2" stroke="#222" stroke-width=".5"/><circle cx="6.6" cy="-5.9" r=".95" fill="#2a2a2a"/><circle cx="-5.5" cy="-0.1" r="2.6" fill="#0c0c0c"/><circle cx="-5.5" cy="-0.1" r="1.15" fill="#6a6a6a"/><circle cx="0.5" cy="-0.1" r="2.3" fill="#f2f2f2" stroke="#222" stroke-width=".5"/><circle cx="0.5" cy="-0.1" r=".95" fill="#2a2a2a"/><circle cx="6.6" cy="-0.1" r="2.3" fill="#f2f2f2" stroke="#222" stroke-width=".5"/><circle cx="6.6" cy="-0.1" r=".95" fill="#2a2a2a"/><circle cx="-5.5" cy="6" r="2.3" fill="#f2f2f2" stroke="#222" stroke-width=".5"/><circle cx="-5.5" cy="6" r=".95" fill="#2a2a2a"/><circle cx="0.5" cy="6" r="2.6" fill="#0c0c0c"/><circle cx="0.5" cy="6" r="1.15" fill="#6a6a6a"/><circle cx="6.6" cy="6" r="2.6" fill="#0c0c0c"/><circle cx="6.6" cy="6" r="1.15" fill="#6a6a6a"/></g><g transform="translate(887.2 79.3)" filter="url(#halo)"><path d="M-8.3 -6.5 L-4.3 -9.2 L7.8 -5.2 L7.8 6.9 L5.1 9.6 L-8.3 4.9 Z" fill="#3350d2" stroke="#0d0d0d" stroke-width="1" stroke-linejoin="round" /><path d="M-8.3 -6.5 L-4.3 -9.2 L7.8 -5.2 L5.1 -2.5 Z" fill="#aebdff" stroke="#0d0d0d" stroke-width="0.8" stroke-linejoin="round" /><path d="M-8.3 -6.5 L5.1 -2.5 L5.1 9.6 L-8.3 4.9 Z" fill="#6683f2" stroke="#0d0d0d" stroke-width="1" stroke-linejoin="round" /><circle cx="-1" cy="1.4" r="3.6" fill="#2c46c4" stroke="#0d0d0d" stroke-width=".8"/><path d="M-6 -3.8L4 6.5M4.2 -2.8L-6.3 6" fill="none" stroke="#ff1414" stroke-width="2" stroke-linecap="round" stroke-linejoin="round" /></g><g transform="translate(916.5 79.3)" filter="url(#halo)"><ellipse cx="-.2" cy=".6" rx="6.8" ry="2.3" fill="#bbb" stroke="#0d0d0d" stroke-width=".8"/><path d="M-6.8 -8 L4.6 -10.2 L6.2 -0.4 L-4.8 1.4 Z" fill="#fafafa" stroke="#0d0d0d" stroke-width="1" stroke-linejoin="round" /><path d="M-4.3 -5.9 L2.6 -7.2 L3.6 -1.6 L-3.2 -0.4 Z" fill="#4a68f0" stroke="#0d0d0d" stroke-width="0.4" stroke-linejoin="round" /><path d="M-7 .6A6.8 2.3 0 0 0 6.6 .6L5.2 9.4A5.4 1.8 0 0 1 -5.6 9.4Z" fill="#ececec" stroke="#0d0d0d" stroke-width=".9"/><path d="M-6 3.4A6 2 0 0 0 5.8 3.4" fill="none" stroke="#bdbdbd" stroke-width=".7"/></g><g transform="translate(944 79.3)" filter="url(#halo)"><path d="M-2.8 -10.5V10.5" fill="none" stroke="#111" stroke-width="4.2" stroke-linecap="round" stroke-linejoin="round" /><path d="M-2.8 -10V10" fill="none" stroke="#8ea3ff" stroke-width="2.2" stroke-linecap="round" stroke-linejoin="round" /><circle cx="-8.9" cy="-5.2" r="2.2" fill="#111"/><circle cx="4.6" cy="-5.2" r="2.2" fill="#111"/><path d="M-10 -1.5L-4.6 -2.2M-8.8 -1.5L-7.8 5.5L-10.6 9M-7.8 5.5L-4.8 6.8" fill="none" stroke="#0d0d0d" stroke-width="1.6" stroke-linecap="round" stroke-linejoin="round" /><path d="M1 -2.5L6.8 -1.6M6 -1.6L7.8 4.6L10.8 8M7.8 4.6L3.8 6" fill="none" stroke="#0d0d0d" stroke-width="1.6" stroke-linecap="round" stroke-linejoin="round" /><path d="M13.8 7V12H8.8z" fill="#eee"/></g></svg>
<div class="abs " style="left:0.8px;top:78px;width:125px;height:271.8px;background:#323232;border-radius:6px 6px 0 0"></div>
<div class="abs " style="left:0.8px;top:78px;width:125px;height:14px;background:#363636;border-radius:6px 6px 0 0;border-bottom:1px solid #4a4a4a"></div>
<div class="abs " style="left:51.9px;top:83px;width:3.3px;height:3.3px;border-radius:50%;border:0.9px solid #858585"></div>
<div class="abs " style="left:58px;top:83px;width:3.3px;height:3.3px;border-radius:50%;border:0.9px solid #858585"></div>
<div class="abs " style="left:64.1px;top:83px;width:3.3px;height:3.3px;border-radius:50%;border:0.9px solid #858585"></div>
<div class="abs " style="left:70.2px;top:83px;width:3.3px;height:3.3px;border-radius:50%;border:0.9px solid #858585"></div>
<div class="abs " style="left:9px;top:103px;width:108.6px;height:19.2px;background:#3d3d3d;border:1px solid #474747;border-bottom-color:#5c5c5c;border-radius:1px"></div>
<div class="t" style="left:12.2px;top:102.825px;font-size:13px;height:19.5px;line-height:19.5px;color:#757575;">指令</div>
<svg class="abs" style="left:0;top:132px" width="130" height="180" viewBox="17 150 130 180"><g transform="translate(35 167) scale(1)" filter="url(#halo)"><path d="M-4 -7.6V5.2L-1.2 2.8L.9 7.6L3.1 6.6L1.1 2L4.8 1.7z" fill="#fff" stroke="#000" stroke-width="1.25" stroke-linejoin="round"/></g><g transform="translate(63 167) scale(1)" filter="url(#halo)"><path d="M-2.9 3L3.4 -2.7" fill="none" stroke="#0d0d0d" stroke-width="1.5" stroke-linecap="round" stroke-linejoin="round" /><path d="M.6 -3L3.8 -3.2L3.6 0" fill="none" stroke="#0d0d0d" stroke-width="1.3" stroke-linecap="round" stroke-linejoin="round" /><rect x="-8.6" y="3" width="5.7" height="5.7" fill="#fff" stroke="#0d0d0d"/><rect x="4" y="-9" width="5.6" height="5.6" fill="#8aa0ff" stroke="#0d0d0d"/></g><g transform="translate(91 167) scale(1)" filter="url(#halo)"><rect x="-10.2" y="-.2" width="10.2" height="4.4" fill="#fff" stroke="#0d0d0d"/><path d="M-0.9 -8.9 L7.2 -8.9 L1 3.6 Z" fill="#1c2f8f" stroke="#0d0d0d" stroke-width="0.6" stroke-linejoin="round" /><rect x="-4.4" y="-2.2" width="8.8" height="4.4" fill="#333" stroke="#ddd" stroke-width="1.1" transform="translate(5.4 5.6) rotate(42)"/></g><g transform="translate(119.5 167) scale(1)" filter="url(#halo)"><rect x="-10" y="1.7" width="18.8" height="4.4" fill="#fff" stroke="#0d0d0d"/><path d="M0 -7 L7.5 -7 L1.2 6.1 Z" fill="#1c2f8f" stroke="#0d0d0d" stroke-width="0.6" stroke-linejoin="round" /></g><g transform="translate(35 195.5) scale(1.22)" filter="url(#halo)"><g transform="translate(-3 -3) rotate(-28)"><rect x="-3" y="-3" width="6" height="6" fill="#0d0d0d" stroke="#0d0d0d" stroke-width="2"/><circle cx="-4.1" cy="0" r="1.55" fill="#0d0d0d" stroke="#0d0d0d" stroke-width="2"/><circle cx="4.1" cy="0" r="1.55" fill="#0d0d0d" stroke="#0d0d0d" stroke-width="2"/><circle cx="0" cy="-4.1" r="1.55" fill="#0d0d0d" stroke="#0d0d0d" stroke-width="2"/><circle cx="0" cy="4.1" r="1.55" fill="#0d0d0d" stroke="#0d0d0d" stroke-width="2"/><rect x="-3" y="-3" width="6" height="6" fill="#ffa41c"/><circle cx="-4.1" cy="0" r="1.55" fill="#ffa41c"/><circle cx="4.1" cy="0" r="1.55" fill="#ffa41c"/><circle cx="0" cy="-4.1" r="1.55" fill="#ffa41c"/><circle cx="0" cy="4.1" r="1.55" fill="#ffa41c"/><path d="M0 0L-4.1 0" stroke="#ffa41c" stroke-width="1.8"/><path d="M0 0L4.1 0" stroke="#ffa41c" stroke-width="1.8"/><path d="M0 0L0 -4.1" stroke="#ffa41c" stroke-width="1.8"/><path d="M0 0L0 4.1" stroke="#ffa41c" stroke-width="1.8"/></g><g transform="translate(3.6 3.2) rotate(-28)"><rect x="-3" y="-3" width="6" height="6" fill="#0d0d0d" stroke="#0d0d0d" stroke-width="2"/><circle cx="-4.1" cy="0" r="1.55" fill="#0d0d0d" stroke="#0d0d0d" stroke-width="2"/><circle cx="4.1" cy="0" r="1.55" fill="#0d0d0d" stroke="#0d0d0d" stroke-width="2"/><circle cx="0" cy="-4.1" r="1.55" fill="#0d0d0d" stroke="#0d0d0d" stroke-width="2"/><circle cx="0" cy="4.1" r="1.55" fill="#0d0d0d" stroke="#0d0d0d" stroke-width="2"/><rect x="-3" y="-3" width="6" height="6" fill="#fff"/><circle cx="-4.1" cy="0" r="1.55" fill="#fff"/><circle cx="4.1" cy="0" r="1.55" fill="#fff"/><circle cx="0" cy="-4.1" r="1.55" fill="#fff"/><circle cx="0" cy="4.1" r="1.55" fill="#fff"/><path d="M0 0L-4.1 0" stroke="#fff" stroke-width="1.8"/><path d="M0 0L4.1 0" stroke="#fff" stroke-width="1.8"/><path d="M0 0L0 -4.1" stroke="#fff" stroke-width="1.8"/><path d="M0 0L0 4.1" stroke="#fff" stroke-width="1.8"/></g></g><g transform="translate(63 195.5) scale(0.92)" filter="url(#halo)"><path d="M-11 10.3L-6 -9.2L-4.3 .6L8.4 -9.9L2.6 4.6L11.5 5.1L.8 7.8L4.6 10.3z" fill="url(#go)" stroke="#0d0d0d" stroke-width="1" stroke-linejoin="round"/></g><g transform="translate(91 195.5) scale(0.92)" filter="url(#halo)"><path d="M-8 -3.75 L0 0.25 L0 8.75 L-8 4.75 Z" fill="#6683f2" stroke="#0d0d0d" stroke-width="1" stroke-linejoin="round" /><path d="M8 -3.75 L0 0.25 L0 8.75 L8 4.75 Z" fill="#3350d2" stroke="#0d0d0d" stroke-width="1" stroke-linejoin="round" /><path d="M0 -7.75 L8 -3.75 L0 0.25 L-8 -3.75 Z" fill="#b7c4ff" stroke="#0d0d0d" stroke-width="1" stroke-linejoin="round" /></g><g transform="translate(119.5 195.5) scale(0.92)" filter="url(#halo)"><path d="M-8 -3.75 L0 0.25 L0 8.75 L-8 4.75 Z" fill="#6683f2" stroke="#0d0d0d" stroke-width="1" stroke-linejoin="round" /><path d="M8 -3.75 L0 0.25 L0 8.75 L8 4.75 Z" fill="#3350d2" stroke="#0d0d0d" stroke-width="1" stroke-linejoin="round" /><path d="M0 -7.75 L8 -3.75 L0 0.25 L-8 -3.75 Z" fill="#b7c4ff" stroke="#0d0d0d" stroke-width="1" stroke-linejoin="round" /><path d="M-8.6 5L8 -7.6" fill="none" stroke="#111" stroke-width="1.1" stroke-linecap="round" stroke-linejoin="round" /><rect x="-10.2" y="3.8" width="2.8" height="2.8" fill="#fff" stroke="#0d0d0d" stroke-width=".8"/><circle cx="8.2" cy="-7.8" r="1.7" fill="#fff" stroke="#0d0d0d" stroke-width=".8"/></g><g transform="translate(35 223) scale(0.92)" filter="url(#halo)"><circle cx="0" cy="0" r="8.5" fill="url(#gs)" stroke="#0d0d0d" stroke-width="1"/><path d="M-1 -7.5V7.5M-7.5 1H7.5" stroke="#22379c" stroke-width=".7" opacity=".55" fill="none"/><path d="M-1.8 -7V6.5" stroke="#e6ebff" stroke-width=".6" opacity=".7" fill="none"/></g><g transform="translate(63 223) scale(0.92)" filter="url(#halo)"><circle cx="0" cy="0" r="8.3" fill="url(#gs)" stroke="#0d0d0d" stroke-width="1"/><path d="M-1 -7.3V7.3M-7.3 1H7.3" stroke="#22379c" stroke-width=".7" opacity=".55" fill="none"/><path d="M-1.8 -6.8V6.3" stroke="#e6ebff" stroke-width=".6" opacity=".7" fill="none"/><ellipse cx="0" cy="0" rx="8.3" ry="3" fill="none" stroke="#0d0d0d" stroke-width=".7" transform="rotate(-15)"/><rect x="-9.7" y="1.3" width="2.4" height="2.4" fill="#fff" stroke="#0d0d0d" stroke-width=".8"/><rect x="7.1" y="-3.7" width="2.4" height="2.4" fill="#fff" stroke="#0d0d0d" stroke-width=".8"/></g><g transform="translate(91 223) scale(0.92)" filter="url(#halo)"><ellipse cx="0" cy="0" rx="9" ry="6" fill="url(#gs)" stroke="#0d0d0d"/><path d="M-7 -3Q1 -2 5 5M-5 4.5Q0 -3 7 -4" fill="none" stroke="#1d2f9a" stroke-width="0.7" stroke-linecap="round" stroke-linejoin="round" /></g><g transform="translate(119.5 223) scale(0.92)" filter="url(#halo)"><path d="M-8 -4Q-9 5 2.5 9Q9 4 7 -6.5Q0 -9 -8 -4z" fill="url(#gs)" stroke="#0d0d0d"/><path d="M2.5 9Q-2 0 2 -7.6Q8 -8 7 -6.5Q9 4 2.5 9z" fill="#3350d2" stroke="#0d0d0d" stroke-width=".8"/></g><g transform="translate(35 251) scale(0.92)" filter="url(#halo)"><path d="M0 -10L8 6.5Q0 11 -8 6.5z" fill="url(#gh)" stroke="#0d0d0d" stroke-linejoin="round"/></g><g transform="translate(63 251) scale(0.92)" filter="url(#halo)"><path d="M-3.8 -7.5Q0 -9.5 3.8 -7.5L8.5 6Q0 11 -8.5 6z" fill="url(#gh)" stroke="#0d0d0d" stroke-linejoin="round"/><ellipse cx="0" cy="-7.3" rx="3.8" ry="1.4" fill="#cdd6ff" stroke="#0d0d0d" stroke-width=".6"/></g><g transform="translate(91 251) scale(0.92)" filter="url(#halo)"><path d="M0 -9.5 L-9 4.5 L-1 9.5 Z" fill="#6683f2" stroke="#0d0d0d" stroke-width="1" stroke-linejoin="round" /><path d="M0 -9.5 L-1 9.5 L9 3.5 Z" fill="#3350d2" stroke="#0d0d0d" stroke-width="1" stroke-linejoin="round" /></g><g transform="translate(119.5 251) scale(0.92)" filter="url(#halo)"><path d="M-9.5 2.5 L-3 -5.5 L5 -5 L9.5 2 L1 8 Z" fill="#6683f2" stroke="#0d0d0d" stroke-width="1" stroke-linejoin="round" /><path d="M-3 -5.5 L5 -5 L4 -0.5 L-3.5 -1 Z" fill="#b7c4ff" stroke="#0d0d0d" stroke-width="1" stroke-linejoin="round" /><path d="M4 -0.5 L5 -5 L9.5 2 L1 8 Z" fill="#3350d2" stroke="#0d0d0d" stroke-width="0.8" stroke-linejoin="round" /></g><g transform="translate(35 279.3) scale(0.92)" filter="url(#halo)"><path d="M-7.5 -6V6.5Q0 10.5 7.5 6.5V-6z" fill="url(#gh)" stroke="#0d0d0d"/><ellipse cx="0" cy="-6" rx="7.5" ry="3" fill="#c3ceff" stroke="#0d0d0d" stroke-width=".8"/></g><g transform="translate(63 279.3) scale(0.92)" filter="url(#halo)"><path d="M-7.5 -6V6.5Q0 10.5 7.5 6.5V-6z" fill="url(#gh)" stroke="#0d0d0d"/><ellipse cx="0" cy="-6" rx="7.5" ry="3" fill="#8fa4fb" stroke="#0d0d0d" stroke-width=".8"/><ellipse cx="0" cy="-5.7" rx="4.6" ry="1.8" fill="#2138a8" stroke="#0d0d0d" stroke-width=".6"/></g><g transform="translate(91 279.3) scale(0.92)" filter="url(#halo)"><ellipse cx="0" cy="0" rx="9" ry="5.5" fill="url(#gs)" stroke="#0d0d0d"/><ellipse cx="0" cy="-.8" rx="3.6" ry="1.5" fill="#d9c9a0" stroke="#0d0d0d" stroke-width=".7"/></g><g transform="translate(119.5 279.3) scale(0.92)" filter="url(#halo)"><path d="M-3.6 -5.6A6.9 6.9 0 0 0 6 2.6" fill="none" stroke="#0d0d0d" stroke-width="7.8" stroke-linecap="round"/><path d="M-3.6 -5.6A6.9 6.9 0 0 0 6 2.6" fill="none" stroke="#4c69e8" stroke-width="5.8" stroke-linecap="round"/><path d="M-5.6 -6.6A8 8 0 0 0 -4.5 2.5" fill="none" stroke="#a9b9ff" stroke-width="2"/></g><g transform="translate(35 307.5) scale(0.92)" filter="url(#halo)"><path d="M2.2 -5.4A6 6 0 1 0 6 5" fill="none" stroke="#0d0d0d" stroke-width="7.6" stroke-linecap="round" stroke-linejoin="round" /><path d="M2.2 -5.4A6 6 0 1 0 6 5" fill="none" stroke="#4c69e8" stroke-width="5.6" stroke-linecap="round" stroke-linejoin="round" /><path d="M-1 -7.2A7 7 0 0 0 -7 -.5" fill="none" stroke="#a9b9ff" stroke-width="2.2" stroke-linecap="round" stroke-linejoin="round" /><path d="M3 -7.2L4.6 -3.4" fill="none" stroke="#fff" stroke-width="1.8" stroke-linecap="round" stroke-linejoin="round" /><path d="M6.8 2.6L8.2 6.4" fill="none" stroke="#fff" stroke-width="1.8" stroke-linecap="round" stroke-linejoin="round" /></g><g transform="translate(63 307.5) scale(0.92)" filter="url(#halo)"><path d="M-7.5 -5Q0 -10 7.5 -5V7Q0 4 -7.5 8.5z" fill="url(#gh)" stroke="#0d0d0d"/><path d="M-7.5 -5Q0 -10 7.5 -5Q0 -6 -7.5 -3z" fill="#cbd5ff" stroke="#0d0d0d" stroke-width=".6"/></g><g transform="translate(91 307.5) scale(0.92)" filter="url(#halo)"><path d="M-7.5 -5Q0 -10 7.5 -5V7Q0 4 -7.5 8.5z" fill="url(#gh)" stroke="#0d0d0d"/><path d="M-7.5 -5Q0 -10 7.5 -5V-2.5Q0 -6.5 -7.5 -2.5z" fill="#fff" stroke="#0d0d0d" stroke-width=".6"/><path d="M-7.5 6Q0 1.5 7.5 4.5V7Q0 4 -7.5 8.5z" fill="#fff" stroke="#0d0d0d" stroke-width=".6"/></g><g transform="translate(119.5 307.5) scale(0.92)" filter="url(#halo)"><path d="M1.6 -11 L11.6 1.6 L5.5 10.6 L-4.4 8 Z" fill="#000" stroke="#000" stroke-width="1" stroke-linejoin="round" /><path d="M-10.9 -0.6 L-5.7 -8.4 L1.6 -10.5 L6.8 -0.6 L0.3 7.6 L-9.2 6.3 Z" fill="#9db0ff" stroke="#0d0d0d" stroke-width="1" stroke-linejoin="round" /><path d="M-9.2 -0.6 L-4.8 -6.7 L1.2 -8.4 L5.1 -1 L-0.1 5.9 L-7.9 5 Z" fill="#3350d2" stroke="#0d0d0d" stroke-width="0.7" stroke-linejoin="round" /><path d="M-4.4 -0.2 L-1.4 -3.2 L2.9 -2.3 L1.2 3.3 L-3.1 5 Z" fill="#dfe4f6" stroke="#0d0d0d" stroke-width="0.6" stroke-linejoin="round" /><path d="M-7.9 5 L-9.2 -0.6 L-4.4 -0.2 L-3.1 5 Z" fill="#b8c5ff" stroke="#0d0d0d" stroke-width="0.5" stroke-linejoin="round" /></g><path d="M77 175V180.5H71.5z" fill="#e0e0e0"/><path d="M49 203.5V209H43.5z" fill="#e0e0e0"/><path d="M105 203.5V209H99.5z" fill="#e0e0e0"/><path d="M49 231V236.5H43.5z" fill="#e0e0e0"/><path d="M105 231V236.5H99.5z" fill="#e0e0e0"/><path d="M105 315.5V321H99.5z" fill="#e0e0e0"/></svg>
<div class="abs " style="left:0.8px;top:353.8px;width:125px;height:269.6px;background:#323232;border-radius:6px 6px 0 0"></div>
<div class="abs " style="left:0.8px;top:353.8px;width:125px;height:19.4px;background:#353535;border-radius:6px 6px 6px 0"></div>
<div class="t" style="left:5px;top:354.025px;font-size:13px;height:19.5px;line-height:19.5px;color:#707070;">物件锁点</div>
<svg class="abs" style="left:108.75px;top:356.25px" width="14.5" height="14.5" viewBox="-10 -10 20 20"><rect x="-1.7" y="-8" width="3.4" height="4" rx=".6" fill="#c8c8c8" transform="rotate(0)"/><rect x="-1.7" y="-8" width="3.4" height="4" rx=".6" fill="#c8c8c8" transform="rotate(45)"/><rect x="-1.7" y="-8" width="3.4" height="4" rx=".6" fill="#c8c8c8" transform="rotate(90)"/><rect x="-1.7" y="-8" width="3.4" height="4" rx=".6" fill="#c8c8c8" transform="rotate(135)"/><rect x="-1.7" y="-8" width="3.4" height="4" rx=".6" fill="#c8c8c8" transform="rotate(180)"/><rect x="-1.7" y="-8" width="3.4" height="4" rx=".6" fill="#c8c8c8" transform="rotate(225)"/><rect x="-1.7" y="-8" width="3.4" height="4" rx=".6" fill="#c8c8c8" transform="rotate(270)"/><rect x="-1.7" y="-8" width="3.4" height="4" rx=".6" fill="#c8c8c8" transform="rotate(315)"/><circle r="4.4" fill="none" stroke="#c8c8c8" stroke-width="3"/></svg>
<div class="abs " style="left:0.8px;top:373.2px;width:125px;height:21px;background:#414141;border-radius:0 0 0 0"></div>
<div class="abs " style="left:0.8px;top:373.2px;width:35.2px;height:21px;background:#323232;border-radius:0 5px 0 0"></div>
<svg class="abs" style="left:7.5px;top:375px;overflow:visible" width="20" height="20" viewBox="-10 -10 20 20"><circle r="6.4" fill="none" stroke="#e6e6e6" stroke-width="1.1"/><circle cx="-.5" r="1.5" fill="none" stroke="#e6e6e6" stroke-width="1"/><path d="M1 0H8.5" stroke="#e6e6e6" stroke-width="1.4"/></svg>
<svg class="abs" style="left:43.5px;top:374.5px;overflow:visible" width="20" height="20" viewBox="-10 -10 20 20"><g transform="rotate(8)"><path d="M-4.4 -5H4.4L1 -.6V4.8L-1 3.9V-.6z" fill="#d8d8d8" stroke="#eee" stroke-width=".5"/></g><path d="M4.6 -7.2Q6.8 -7 7.4 -4.8M-6.6 4.2Q-6.6 6.6 -4.4 7.2" fill="none" stroke="#ddd" stroke-width="1"/></svg>
<div class="abs " style="left:15px;top:403.5px;width:11.2px;height:12px;border-radius:2.8px;background:linear-gradient(#5c5c5c,#4b4b4b)"></div>
<div class="t" style="left:30px;top:402.075px;font-size:11px;height:16.5px;line-height:16.5px;color:#ededed;font-weight:500">端点</div>
<div class="abs " style="left:15px;top:418.5px;width:11.2px;height:12px;border-radius:2.8px;background:linear-gradient(#5c5c5c,#4b4b4b)"></div>
<div class="t" style="left:30px;top:417.075px;font-size:11px;height:16.5px;line-height:16.5px;color:#ededed;font-weight:500">最近点</div>
<div class="abs " style="left:15px;top:433.5px;width:11.2px;height:12px;border-radius:2.8px;background:linear-gradient(#5c5c5c,#4b4b4b)"></div>
<div class="t" style="left:30px;top:432.075px;font-size:11px;height:16.5px;line-height:16.5px;color:#ededed;font-weight:500">点</div>
<div class="abs " style="left:15px;top:448.5px;width:11.2px;height:12px;border-radius:2.8px;background:linear-gradient(#5c5c5c,#4b4b4b)"></div>
<div class="t" style="left:30px;top:447.075px;font-size:11px;height:16.5px;line-height:16.5px;color:#ededed;font-weight:500">中点</div>
<div class="abs " style="left:15px;top:463.5px;width:11.2px;height:12px;border-radius:2.8px;background:linear-gradient(#5c5c5c,#4b4b4b)"></div>
<div class="t" style="left:30px;top:462.075px;font-size:11px;height:16.5px;line-height:16.5px;color:#ededed;font-weight:500">中心点</div>
<div class="abs " style="left:15px;top:478.5px;width:11.2px;height:12px;border-radius:2.8px;background:linear-gradient(#5c5c5c,#4b4b4b)"></div>
<div class="t" style="left:30px;top:477.075px;font-size:11px;height:16.5px;line-height:16.5px;color:#ededed;font-weight:500">交点</div>
<div class="abs " style="left:15px;top:493.5px;width:11.2px;height:12px;border-radius:2.8px;background:linear-gradient(#5c5c5c,#4b4b4b)"></div>
<div class="t" style="left:30px;top:492.075px;font-size:11px;height:16.5px;line-height:16.5px;color:#ededed;font-weight:500">垂点</div>
<div class="abs " style="left:15px;top:508.5px;width:11.2px;height:12px;border-radius:2.8px;background:linear-gradient(#5c5c5c,#4b4b4b)"></div>
<div class="t" style="left:30px;top:507.075px;font-size:11px;height:16.5px;line-height:16.5px;color:#ededed;font-weight:500">切点</div>
<div class="abs " style="left:15px;top:523.5px;width:11.2px;height:12px;border-radius:2.8px;background:linear-gradient(#5c5c5c,#4b4b4b)"></div>
<div class="t" style="left:30px;top:522.075px;font-size:11px;height:16.5px;line-height:16.5px;color:#ededed;font-weight:500">四分点</div>
<div class="abs " style="left:15px;top:538.5px;width:11.2px;height:12px;border-radius:2.8px;background:linear-gradient(#5c5c5c,#4b4b4b)"></div>
<div class="t" style="left:30px;top:537.075px;font-size:11px;height:16.5px;line-height:16.5px;color:#ededed;font-weight:500">节点</div>
<div class="abs " style="left:15px;top:553.5px;width:11.2px;height:12px;border-radius:2.8px;background:linear-gradient(#5c5c5c,#4b4b4b)"></div>
<div class="t" style="left:30px;top:552.075px;font-size:11px;height:16.5px;line-height:16.5px;color:#ededed;font-weight:500">顶点</div>
<div class="abs " style="left:15px;top:568.5px;width:11.2px;height:12px;border-radius:2.8px;background:linear-gradient(#5c5c5c,#4b4b4b)"></div>
<div class="t" style="left:30px;top:567.075px;font-size:11px;height:16.5px;line-height:16.5px;color:#ededed;font-weight:500">投影</div>
<div class="abs " style="left:15px;top:600px;width:11.2px;height:12px;border-radius:2.8px;background:linear-gradient(#5c5c5c,#4b4b4b)"></div>
<div class="t" style="left:30px;top:598.575px;font-size:11px;height:16.5px;line-height:16.5px;color:#ededed;font-weight:500">停用</div>
<div class="abs " style="left:129px;top:78px;width:642.2px;height:520px;background:#a1a7b0;overflow:hidden"><svg width="642" height="520" viewBox="146 96 642 520" style="display:block;position:absolute;left:0;top:0"><g fill="none"><path d="M181.4 96V616" stroke="#969ba4" stroke-width="1"/><path d="M253.6 96V616" stroke="#969ba4" stroke-width="1"/><path d="M325.8 96V616" stroke="#969ba4" stroke-width="1"/><path d="M398.0 96V616" stroke="#969ba4" stroke-width="1"/><path d="M470.2 96V616" stroke="#8d919b" stroke-width="1"/><path d="M542.4 96V616" stroke="#969ba4" stroke-width="1"/><path d="M614.6 96V616" stroke="#969ba4" stroke-width="1"/><path d="M686.8 96V616" stroke="#969ba4" stroke-width="1"/><path d="M759.0 96V616" stroke="#969ba4" stroke-width="1"/><path d="M146 121.3H788" stroke="#979ca5" stroke-width="1"/><path d="M146 193.5H788" stroke="#8f939c" stroke-width="1"/><path d="M146 265.7H788" stroke="#979ca5" stroke-width="1"/><path d="M146 337.9H788" stroke="#979ca5" stroke-width="1"/><path d="M146 410.1H788" stroke="#979ca5" stroke-width="1"/><path d="M146 482.3H788" stroke="#979ca5" stroke-width="1"/><path d="M146 554.5H788" stroke="#979ca5" stroke-width="1"/></g><path d="M182.7 545V579.5H211.5" fill="none" stroke="#6b6f76" stroke-width="1"/><text x="215.5" y="581" font-size="11" fill="#5f6369" font-family="Liberation Sans,sans-serif">x</text><text x="185.5" y="548" font-size="11" fill="#5f6369" font-family="Liberation Sans,sans-serif">y</text><g fill="none" stroke="#050505" stroke-width="1.45"><rect x="326" y="134.2" width="222" height="3.2" rx="1.6" stroke-width="1.6"/><path d="M330 135.4H545" stroke-width="1.8"/><rect x="305" y="139.4" width="261.5" height="4.4" rx="2.2" stroke-width="1.9"/><ellipse cx="335.7" cy="141.7" rx="28.3" ry="1.8" stroke-width="1.6"/><ellipse cx="374.1" cy="141.7" rx="7.4" ry="1.8" stroke-width="1.6"/><ellipse cx="398.9" cy="141.7" rx="14.9" ry="1.8" stroke-width="1.6"/><ellipse cx="459.4" cy="141.7" rx="41.2" ry="1.8" stroke-width="1.6"/><ellipse cx="506.2" cy="141.7" rx="2.8" ry="1.8" stroke-width="1.6"/><ellipse cx="510.0" cy="141.7" rx="3.5" ry="1.8" stroke-width="1.6"/><ellipse cx="522.9" cy="141.7" rx="9.4" ry="1.8" stroke-width="1.6"/><ellipse cx="550.0" cy="141.7" rx="15.4" ry="1.8" stroke-width="1.6"/><rect x="302.6" y="141.5" width="265.4" height="40" rx="6" stroke-width="1.6"/><ellipse cx="335.7" cy="162.2" rx="28.3" ry="16.8" stroke-width="1.7"/><ellipse cx="374.1" cy="162.2" rx="7.4" ry="16.8" stroke-width="1.7"/><ellipse cx="398.9" cy="162.2" rx="14.9" ry="16.8" stroke-width="1.7"/><ellipse cx="459.4" cy="162.2" rx="41.2" ry="16.8" stroke-width="1.7"/><ellipse cx="506.2" cy="162.2" rx="2.8" ry="16.8" stroke-width="1.7"/><ellipse cx="510.0" cy="162.2" rx="3.5" ry="16.8" stroke-width="1.7"/><ellipse cx="522.9" cy="162.2" rx="9.4" ry="16.8" stroke-width="1.7"/><ellipse cx="550.0" cy="162.2" rx="15.4" ry="16.8" stroke-width="1.7"/><ellipse cx="549" cy="162.2" rx="14" ry="16.8"/><ellipse cx="525" cy="162.2" rx="6.5" ry="16.8"/><path d="M311.5 146V522" stroke-width="0.85"/><path d="M320.5 146V522" stroke-width="0.85"/><path d="M325.5 143V522" stroke-width="1.10"/><path d="M335.5 146V522" stroke-width="0.85"/><path d="M350.5 146V522" stroke-width="0.85"/><path d="M366.5 143V522" stroke-width="1.19"/><path d="M382.5 143V522" stroke-width="1.10"/><path d="M397.5 146V522" stroke-width="0.85"/><path d="M415.5 143V522" stroke-width="1.53"/><path d="M418.5 143V522" stroke-width="1.53"/><path d="M438.5 146V522" stroke-width="0.85"/><path d="M458.5 146V522" stroke-width="0.85"/><path d="M470.5 146V522" stroke-width="0.85"/><path d="M483.5 146V522" stroke-width="0.85"/><path d="M500.5 143V522" stroke-width="1.10"/><path d="M504.5 146V522" stroke-width="1.02"/><path d="M508.5 143V522" stroke-width="1.19"/><path d="M512.5 143V522" stroke-width="1.19"/><path d="M516.5 146V522" stroke-width="0.85"/><path d="M532.5 143V522" stroke-width="1.10"/><path d="M534.5 146V522" stroke-width="0.85"/><path d="M550.5 146V522" stroke-width="0.85"/><path d="M566.5 143V522" stroke-width="1.36"/><path d="M568.5 146V522" stroke-width="1.02"/><ellipse cx="335.7" cy="184.7" rx="28.3" ry="3.1" stroke-width="1.95"/><ellipse cx="374.1" cy="184.7" rx="7.4" ry="3.1" stroke-width="1.95"/><ellipse cx="398.9" cy="184.7" rx="14.9" ry="3.1" stroke-width="1.95"/><ellipse cx="459.4" cy="184.7" rx="41.2" ry="3.1" stroke-width="1.95"/><ellipse cx="506.2" cy="184.7" rx="2.8" ry="3.1" stroke-width="1.95"/><ellipse cx="510.0" cy="184.7" rx="3.5" ry="3.1" stroke-width="1.95"/><ellipse cx="522.9" cy="184.7" rx="9.4" ry="3.1" stroke-width="1.95"/><ellipse cx="550.0" cy="184.7" rx="15.4" ry="3.1" stroke-width="1.95"/><ellipse cx="335.7" cy="191.2" rx="29.8" ry="2.05" stroke-width="1.55"/><ellipse cx="374.1" cy="191.2" rx="8.9" ry="2.05" stroke-width="1.55"/><ellipse cx="398.9" cy="191.2" rx="16.4" ry="2.05" stroke-width="1.55"/><ellipse cx="459.4" cy="191.2" rx="42.7" ry="2.05" stroke-width="1.55"/><ellipse cx="506.2" cy="191.2" rx="4.2" ry="2.05" stroke-width="1.55"/><ellipse cx="510.0" cy="191.2" rx="5.0" ry="2.05" stroke-width="1.55"/><ellipse cx="522.9" cy="191.2" rx="10.9" ry="2.05" stroke-width="1.55"/><ellipse cx="550.0" cy="191.2" rx="16.9" ry="2.05" stroke-width="1.55"/><path d="M304 193.5H567.5" stroke-width="1.8"/><path d="M307 189.3H566" stroke-width="1.1"/><circle cx="304.8" cy="191.5" r="1.9" stroke-width="1.4"/><path d="M566 191.5h3.5" stroke-width="2"/><ellipse cx="335.7" cy="197.5" rx="28.3" ry="3.1" stroke-width="1.95"/><ellipse cx="374.1" cy="197.5" rx="7.4" ry="3.1" stroke-width="1.95"/><ellipse cx="398.9" cy="197.5" rx="14.9" ry="3.1" stroke-width="1.95"/><ellipse cx="459.4" cy="197.5" rx="41.2" ry="3.1" stroke-width="1.95"/><ellipse cx="506.2" cy="197.5" rx="2.8" ry="3.1" stroke-width="1.95"/><ellipse cx="510.0" cy="197.5" rx="3.5" ry="3.1" stroke-width="1.95"/><ellipse cx="522.9" cy="197.5" rx="9.4" ry="3.1" stroke-width="1.95"/><ellipse cx="550.0" cy="197.5" rx="15.4" ry="3.1" stroke-width="1.95"/><ellipse cx="335.7" cy="204.0" rx="29.8" ry="2.05" stroke-width="1.55"/><ellipse cx="374.1" cy="204.0" rx="8.9" ry="2.05" stroke-width="1.55"/><ellipse cx="398.9" cy="204.0" rx="16.4" ry="2.05" stroke-width="1.55"/><ellipse cx="459.4" cy="204.0" rx="42.7" ry="2.05" stroke-width="1.55"/><ellipse cx="506.2" cy="204.0" rx="4.2" ry="2.05" stroke-width="1.55"/><ellipse cx="510.0" cy="204.0" rx="5.0" ry="2.05" stroke-width="1.55"/><ellipse cx="522.9" cy="204.0" rx="10.9" ry="2.05" stroke-width="1.55"/><ellipse cx="550.0" cy="204.0" rx="16.9" ry="2.05" stroke-width="1.55"/><path d="M304 206.3H567.5" stroke-width="1.8"/><path d="M307 202.1H566" stroke-width="1.1"/><circle cx="304.8" cy="204.3" r="1.9" stroke-width="1.4"/><path d="M566 204.3h3.5" stroke-width="2"/><ellipse cx="335.7" cy="210.3" rx="28.3" ry="3.1" stroke-width="1.95"/><ellipse cx="374.1" cy="210.3" rx="7.4" ry="3.1" stroke-width="1.95"/><ellipse cx="398.9" cy="210.3" rx="14.9" ry="3.1" stroke-width="1.95"/><ellipse cx="459.4" cy="210.3" rx="41.2" ry="3.1" stroke-width="1.95"/><ellipse cx="506.2" cy="210.3" rx="2.8" ry="3.1" stroke-width="1.95"/><ellipse cx="510.0" cy="210.3" rx="3.5" ry="3.1" stroke-width="1.95"/><ellipse cx="522.9" cy="210.3" rx="9.4" ry="3.1" stroke-width="1.95"/><ellipse cx="550.0" cy="210.3" rx="15.4" ry="3.1" stroke-width="1.95"/><ellipse cx="335.7" cy="216.8" rx="29.8" ry="2.05" stroke-width="1.55"/><ellipse cx="374.1" cy="216.8" rx="8.9" ry="2.05" stroke-width="1.55"/><ellipse cx="398.9" cy="216.8" rx="16.4" ry="2.05" stroke-width="1.55"/><ellipse cx="459.4" cy="216.8" rx="42.7" ry="2.05" stroke-width="1.55"/><ellipse cx="506.2" cy="216.8" rx="4.2" ry="2.05" stroke-width="1.55"/><ellipse cx="510.0" cy="216.8" rx="5.0" ry="2.05" stroke-width="1.55"/><ellipse cx="522.9" cy="216.8" rx="10.9" ry="2.05" stroke-width="1.55"/><ellipse cx="550.0" cy="216.8" rx="16.9" ry="2.05" stroke-width="1.55"/><path d="M304 219.1H567.5" stroke-width="1.8"/><path d="M307 214.9H566" stroke-width="1.1"/><circle cx="304.8" cy="217.1" r="1.9" stroke-width="1.4"/><path d="M566 217.1h3.5" stroke-width="2"/><ellipse cx="335.7" cy="223.1" rx="28.3" ry="3.1" stroke-width="1.95"/><ellipse cx="374.1" cy="223.1" rx="7.4" ry="3.1" stroke-width="1.95"/><ellipse cx="398.9" cy="223.1" rx="14.9" ry="3.1" stroke-width="1.95"/><ellipse cx="459.4" cy="223.1" rx="41.2" ry="3.1" stroke-width="1.95"/><ellipse cx="506.2" cy="223.1" rx="2.8" ry="3.1" stroke-width="1.95"/><ellipse cx="510.0" cy="223.1" rx="3.5" ry="3.1" stroke-width="1.95"/><ellipse cx="522.9" cy="223.1" rx="9.4" ry="3.1" stroke-width="1.95"/><ellipse cx="550.0" cy="223.1" rx="15.4" ry="3.1" stroke-width="1.95"/><ellipse cx="335.7" cy="229.6" rx="29.8" ry="2.05" stroke-width="1.55"/><ellipse cx="374.1" cy="229.6" rx="8.9" ry="2.05" stroke-width="1.55"/><ellipse cx="398.9" cy="229.6" rx="16.4" ry="2.05" stroke-width="1.55"/><ellipse cx="459.4" cy="229.6" rx="42.7" ry="2.05" stroke-width="1.55"/><ellipse cx="506.2" cy="229.6" rx="4.2" ry="2.05" stroke-width="1.55"/><ellipse cx="510.0" cy="229.6" rx="5.0" ry="2.05" stroke-width="1.55"/><ellipse cx="522.9" cy="229.6" rx="10.9" ry="2.05" stroke-width="1.55"/><ellipse cx="550.0" cy="229.6" rx="16.9" ry="2.05" stroke-width="1.55"/><path d="M304 231.9H567.5" stroke-width="1.8"/><path d="M307 227.7H566" stroke-width="1.1"/><circle cx="304.8" cy="229.9" r="1.9" stroke-width="1.4"/><path d="M566 229.9h3.5" stroke-width="2"/><ellipse cx="335.7" cy="235.9" rx="28.3" ry="3.1" stroke-width="1.95"/><ellipse cx="374.1" cy="235.9" rx="7.4" ry="3.1" stroke-width="1.95"/><ellipse cx="398.9" cy="235.9" rx="14.9" ry="3.1" stroke-width="1.95"/><ellipse cx="459.4" cy="235.9" rx="41.2" ry="3.1" stroke-width="1.95"/><ellipse cx="506.2" cy="235.9" rx="2.8" ry="3.1" stroke-width="1.95"/><ellipse cx="510.0" cy="235.9" rx="3.5" ry="3.1" stroke-width="1.95"/><ellipse cx="522.9" cy="235.9" rx="9.4" ry="3.1" stroke-width="1.95"/><ellipse cx="550.0" cy="235.9" rx="15.4" ry="3.1" stroke-width="1.95"/><ellipse cx="335.7" cy="242.4" rx="29.8" ry="2.05" stroke-width="1.55"/><ellipse cx="374.1" cy="242.4" rx="8.9" ry="2.05" stroke-width="1.55"/><ellipse cx="398.9" cy="242.4" rx="16.4" ry="2.05" stroke-width="1.55"/><ellipse cx="459.4" cy="242.4" rx="42.7" ry="2.05" stroke-width="1.55"/><ellipse cx="506.2" cy="242.4" rx="4.2" ry="2.05" stroke-width="1.55"/><ellipse cx="510.0" cy="242.4" rx="5.0" ry="2.05" stroke-width="1.55"/><ellipse cx="522.9" cy="242.4" rx="10.9" ry="2.05" stroke-width="1.55"/><ellipse cx="550.0" cy="242.4" rx="16.9" ry="2.05" stroke-width="1.55"/><path d="M304 244.7H567.5" stroke-width="1.8"/><path d="M307 240.5H566" stroke-width="1.1"/><circle cx="304.8" cy="242.7" r="1.9" stroke-width="1.4"/><path d="M566 242.7h3.5" stroke-width="2"/><ellipse cx="335.7" cy="248.7" rx="28.3" ry="3.1" stroke-width="1.95"/><ellipse cx="374.1" cy="248.7" rx="7.4" ry="3.1" stroke-width="1.95"/><ellipse cx="398.9" cy="248.7" rx="14.9" ry="3.1" stroke-width="1.95"/><ellipse cx="459.4" cy="248.7" rx="41.2" ry="3.1" stroke-width="1.95"/><ellipse cx="506.2" cy="248.7" rx="2.8" ry="3.1" stroke-width="1.95"/><ellipse cx="510.0" cy="248.7" rx="3.5" ry="3.1" stroke-width="1.95"/><ellipse cx="522.9" cy="248.7" rx="9.4" ry="3.1" stroke-width="1.95"/><ellipse cx="550.0" cy="248.7" rx="15.4" ry="3.1" stroke-width="1.95"/><ellipse cx="335.7" cy="255.2" rx="29.8" ry="2.05" stroke-width="1.55"/><ellipse cx="374.1" cy="255.2" rx="8.9" ry="2.05" stroke-width="1.55"/><ellipse cx="398.9" cy="255.2" rx="16.4" ry="2.05" stroke-width="1.55"/><ellipse cx="459.4" cy="255.2" rx="42.7" ry="2.05" stroke-width="1.55"/><ellipse cx="506.2" cy="255.2" rx="4.2" ry="2.05" stroke-width="1.55"/><ellipse cx="510.0" cy="255.2" rx="5.0" ry="2.05" stroke-width="1.55"/><ellipse cx="522.9" cy="255.2" rx="10.9" ry="2.05" stroke-width="1.55"/><ellipse cx="550.0" cy="255.2" rx="16.9" ry="2.05" stroke-width="1.55"/><path d="M304 257.5H567.5" stroke-width="1.8"/><path d="M307 253.3H566" stroke-width="1.1"/><circle cx="304.8" cy="255.5" r="1.9" stroke-width="1.4"/><path d="M566 255.5h3.5" stroke-width="2"/><ellipse cx="335.7" cy="261.5" rx="28.3" ry="3.1" stroke-width="1.95"/><ellipse cx="374.1" cy="261.5" rx="7.4" ry="3.1" stroke-width="1.95"/><ellipse cx="398.9" cy="261.5" rx="14.9" ry="3.1" stroke-width="1.95"/><ellipse cx="459.4" cy="261.5" rx="41.2" ry="3.1" stroke-width="1.95"/><ellipse cx="506.2" cy="261.5" rx="2.8" ry="3.1" stroke-width="1.95"/><ellipse cx="510.0" cy="261.5" rx="3.5" ry="3.1" stroke-width="1.95"/><ellipse cx="522.9" cy="261.5" rx="9.4" ry="3.1" stroke-width="1.95"/><ellipse cx="550.0" cy="261.5" rx="15.4" ry="3.1" stroke-width="1.95"/><ellipse cx="335.7" cy="268.0" rx="29.8" ry="2.05" stroke-width="1.55"/><ellipse cx="374.1" cy="268.0" rx="8.9" ry="2.05" stroke-width="1.55"/><ellipse cx="398.9" cy="268.0" rx="16.4" ry="2.05" stroke-width="1.55"/><ellipse cx="459.4" cy="268.0" rx="42.7" ry="2.05" stroke-width="1.55"/><ellipse cx="506.2" cy="268.0" rx="4.2" ry="2.05" stroke-width="1.55"/><ellipse cx="510.0" cy="268.0" rx="5.0" ry="2.05" stroke-width="1.55"/><ellipse cx="522.9" cy="268.0" rx="10.9" ry="2.05" stroke-width="1.55"/><ellipse cx="550.0" cy="268.0" rx="16.9" ry="2.05" stroke-width="1.55"/><path d="M304 270.3H567.5" stroke-width="1.8"/><path d="M307 266.1H566" stroke-width="1.1"/><circle cx="304.8" cy="268.3" r="1.9" stroke-width="1.4"/><path d="M566 268.3h3.5" stroke-width="2"/><ellipse cx="335.7" cy="274.3" rx="28.3" ry="3.1" stroke-width="1.95"/><ellipse cx="374.1" cy="274.3" rx="7.4" ry="3.1" stroke-width="1.95"/><ellipse cx="398.9" cy="274.3" rx="14.9" ry="3.1" stroke-width="1.95"/><ellipse cx="459.4" cy="274.3" rx="41.2" ry="3.1" stroke-width="1.95"/><ellipse cx="506.2" cy="274.3" rx="2.8" ry="3.1" stroke-width="1.95"/><ellipse cx="510.0" cy="274.3" rx="3.5" ry="3.1" stroke-width="1.95"/><ellipse cx="522.9" cy="274.3" rx="9.4" ry="3.1" stroke-width="1.95"/><ellipse cx="550.0" cy="274.3" rx="15.4" ry="3.1" stroke-width="1.95"/><ellipse cx="335.7" cy="280.8" rx="29.8" ry="2.05" stroke-width="1.55"/><ellipse cx="374.1" cy="280.8" rx="8.9" ry="2.05" stroke-width="1.55"/><ellipse cx="398.9" cy="280.8" rx="16.4" ry="2.05" stroke-width="1.55"/><ellipse cx="459.4" cy="280.8" rx="42.7" ry="2.05" stroke-width="1.55"/><ellipse cx="506.2" cy="280.8" rx="4.2" ry="2.05" stroke-width="1.55"/><ellipse cx="510.0" cy="280.8" rx="5.0" ry="2.05" stroke-width="1.55"/><ellipse cx="522.9" cy="280.8" rx="10.9" ry="2.05" stroke-width="1.55"/><ellipse cx="550.0" cy="280.8" rx="16.9" ry="2.05" stroke-width="1.55"/><path d="M304 283.1H567.5" stroke-width="1.8"/><path d="M307 278.9H566" stroke-width="1.1"/><circle cx="304.8" cy="281.1" r="1.9" stroke-width="1.4"/><path d="M566 281.1h3.5" stroke-width="2"/><ellipse cx="335.7" cy="287.1" rx="28.3" ry="3.1" stroke-width="1.95"/><ellipse cx="374.1" cy="287.1" rx="7.4" ry="3.1" stroke-width="1.95"/><ellipse cx="398.9" cy="287.1" rx="14.9" ry="3.1" stroke-width="1.95"/><ellipse cx="459.4" cy="287.1" rx="41.2" ry="3.1" stroke-width="1.95"/><ellipse cx="506.2" cy="287.1" rx="2.8" ry="3.1" stroke-width="1.95"/><ellipse cx="510.0" cy="287.1" rx="3.5" ry="3.1" stroke-width="1.95"/><ellipse cx="522.9" cy="287.1" rx="9.4" ry="3.1" stroke-width="1.95"/><ellipse cx="550.0" cy="287.1" rx="15.4" ry="3.1" stroke-width="1.95"/><ellipse cx="335.7" cy="293.6" rx="29.8" ry="2.05" stroke-width="1.55"/><ellipse cx="374.1" cy="293.6" rx="8.9" ry="2.05" stroke-width="1.55"/><ellipse cx="398.9" cy="293.6" rx="16.4" ry="2.05" stroke-width="1.55"/><ellipse cx="459.4" cy="293.6" rx="42.7" ry="2.05" stroke-width="1.55"/><ellipse cx="506.2" cy="293.6" rx="4.2" ry="2.05" stroke-width="1.55"/><ellipse cx="510.0" cy="293.6" rx="5.0" ry="2.05" stroke-width="1.55"/><ellipse cx="522.9" cy="293.6" rx="10.9" ry="2.05" stroke-width="1.55"/><ellipse cx="550.0" cy="293.6" rx="16.9" ry="2.05" stroke-width="1.55"/><path d="M304 295.9H567.5" stroke-width="1.8"/><path d="M307 291.7H566" stroke-width="1.1"/><circle cx="304.8" cy="293.9" r="1.9" stroke-width="1.4"/><path d="M566 293.9h3.5" stroke-width="2"/><ellipse cx="335.7" cy="299.9" rx="28.3" ry="3.1" stroke-width="1.95"/><ellipse cx="374.1" cy="299.9" rx="7.4" ry="3.1" stroke-width="1.95"/><ellipse cx="398.9" cy="299.9" rx="14.9" ry="3.1" stroke-width="1.95"/><ellipse cx="459.4" cy="299.9" rx="41.2" ry="3.1" stroke-width="1.95"/><ellipse cx="506.2" cy="299.9" rx="2.8" ry="3.1" stroke-width="1.95"/><ellipse cx="510.0" cy="299.9" rx="3.5" ry="3.1" stroke-width="1.95"/><ellipse cx="522.9" cy="299.9" rx="9.4" ry="3.1" stroke-width="1.95"/><ellipse cx="550.0" cy="299.9" rx="15.4" ry="3.1" stroke-width="1.95"/><ellipse cx="335.7" cy="306.4" rx="29.8" ry="2.05" stroke-width="1.55"/><ellipse cx="374.1" cy="306.4" rx="8.9" ry="2.05" stroke-width="1.55"/><ellipse cx="398.9" cy="306.4" rx="16.4" ry="2.05" stroke-width="1.55"/><ellipse cx="459.4" cy="306.4" rx="42.7" ry="2.05" stroke-width="1.55"/><ellipse cx="506.2" cy="306.4" rx="4.2" ry="2.05" stroke-width="1.55"/><ellipse cx="510.0" cy="306.4" rx="5.0" ry="2.05" stroke-width="1.55"/><ellipse cx="522.9" cy="306.4" rx="10.9" ry="2.05" stroke-width="1.55"/><ellipse cx="550.0" cy="306.4" rx="16.9" ry="2.05" stroke-width="1.55"/><path d="M304 308.7H567.5" stroke-width="1.8"/><path d="M307 304.5H566" stroke-width="1.1"/><circle cx="304.8" cy="306.7" r="1.9" stroke-width="1.4"/><path d="M566 306.7h3.5" stroke-width="2"/><ellipse cx="335.7" cy="312.7" rx="28.3" ry="3.1" stroke-width="1.95"/><ellipse cx="374.1" cy="312.7" rx="7.4" ry="3.1" stroke-width="1.95"/><ellipse cx="398.9" cy="312.7" rx="14.9" ry="3.1" stroke-width="1.95"/><ellipse cx="459.4" cy="312.7" rx="41.2" ry="3.1" stroke-width="1.95"/><ellipse cx="506.2" cy="312.7" rx="2.8" ry="3.1" stroke-width="1.95"/><ellipse cx="510.0" cy="312.7" rx="3.5" ry="3.1" stroke-width="1.95"/><ellipse cx="522.9" cy="312.7" rx="9.4" ry="3.1" stroke-width="1.95"/><ellipse cx="550.0" cy="312.7" rx="15.4" ry="3.1" stroke-width="1.95"/><ellipse cx="335.7" cy="319.2" rx="29.8" ry="2.05" stroke-width="1.55"/><ellipse cx="374.1" cy="319.2" rx="8.9" ry="2.05" stroke-width="1.55"/><ellipse cx="398.9" cy="319.2" rx="16.4" ry="2.05" stroke-width="1.55"/><ellipse cx="459.4" cy="319.2" rx="42.7" ry="2.05" stroke-width="1.55"/><ellipse cx="506.2" cy="319.2" rx="4.2" ry="2.05" stroke-width="1.55"/><ellipse cx="510.0" cy="319.2" rx="5.0" ry="2.05" stroke-width="1.55"/><ellipse cx="522.9" cy="319.2" rx="10.9" ry="2.05" stroke-width="1.55"/><ellipse cx="550.0" cy="319.2" rx="16.9" ry="2.05" stroke-width="1.55"/><path d="M304 321.5H567.5" stroke-width="1.8"/><path d="M307 317.3H566" stroke-width="1.1"/><circle cx="304.8" cy="319.5" r="1.9" stroke-width="1.4"/><path d="M566 319.5h3.5" stroke-width="2"/><ellipse cx="335.7" cy="325.5" rx="28.3" ry="3.1" stroke-width="1.95"/><ellipse cx="374.1" cy="325.5" rx="7.4" ry="3.1" stroke-width="1.95"/><ellipse cx="398.9" cy="325.5" rx="14.9" ry="3.1" stroke-width="1.95"/><ellipse cx="459.4" cy="325.5" rx="41.2" ry="3.1" stroke-width="1.95"/><ellipse cx="506.2" cy="325.5" rx="2.8" ry="3.1" stroke-width="1.95"/><ellipse cx="510.0" cy="325.5" rx="3.5" ry="3.1" stroke-width="1.95"/><ellipse cx="522.9" cy="325.5" rx="9.4" ry="3.1" stroke-width="1.95"/><ellipse cx="550.0" cy="325.5" rx="15.4" ry="3.1" stroke-width="1.95"/><ellipse cx="335.7" cy="332.0" rx="29.8" ry="2.05" stroke-width="1.55"/><ellipse cx="374.1" cy="332.0" rx="8.9" ry="2.05" stroke-width="1.55"/><ellipse cx="398.9" cy="332.0" rx="16.4" ry="2.05" stroke-width="1.55"/><ellipse cx="459.4" cy="332.0" rx="42.7" ry="2.05" stroke-width="1.55"/><ellipse cx="506.2" cy="332.0" rx="4.2" ry="2.05" stroke-width="1.55"/><ellipse cx="510.0" cy="332.0" rx="5.0" ry="2.05" stroke-width="1.55"/><ellipse cx="522.9" cy="332.0" rx="10.9" ry="2.05" stroke-width="1.55"/><ellipse cx="550.0" cy="332.0" rx="16.9" ry="2.05" stroke-width="1.55"/><path d="M304 334.3H567.5" stroke-width="1.8"/><path d="M307 330.1H566" stroke-width="1.1"/><circle cx="304.8" cy="332.3" r="1.9" stroke-width="1.4"/><path d="M566 332.3h3.5" stroke-width="2"/><ellipse cx="335.7" cy="338.3" rx="28.3" ry="3.1" stroke-width="1.95"/><ellipse cx="374.1" cy="338.3" rx="7.4" ry="3.1" stroke-width="1.95"/><ellipse cx="398.9" cy="338.3" rx="14.9" ry="3.1" stroke-width="1.95"/><ellipse cx="459.4" cy="338.3" rx="41.2" ry="3.1" stroke-width="1.95"/><ellipse cx="506.2" cy="338.3" rx="2.8" ry="3.1" stroke-width="1.95"/><ellipse cx="510.0" cy="338.3" rx="3.5" ry="3.1" stroke-width="1.95"/><ellipse cx="522.9" cy="338.3" rx="9.4" ry="3.1" stroke-width="1.95"/><ellipse cx="550.0" cy="338.3" rx="15.4" ry="3.1" stroke-width="1.95"/><ellipse cx="335.7" cy="344.8" rx="29.8" ry="2.05" stroke-width="1.55"/><ellipse cx="374.1" cy="344.8" rx="8.9" ry="2.05" stroke-width="1.55"/><ellipse cx="398.9" cy="344.8" rx="16.4" ry="2.05" stroke-width="1.55"/><ellipse cx="459.4" cy="344.8" rx="42.7" ry="2.05" stroke-width="1.55"/><ellipse cx="506.2" cy="344.8" rx="4.2" ry="2.05" stroke-width="1.55"/><ellipse cx="510.0" cy="344.8" rx="5.0" ry="2.05" stroke-width="1.55"/><ellipse cx="522.9" cy="344.8" rx="10.9" ry="2.05" stroke-width="1.55"/><ellipse cx="550.0" cy="344.8" rx="16.9" ry="2.05" stroke-width="1.55"/><path d="M304 347.1H567.5" stroke-width="1.8"/><path d="M307 342.9H566" stroke-width="1.1"/><circle cx="304.8" cy="345.1" r="1.9" stroke-width="1.4"/><path d="M566 345.1h3.5" stroke-width="2"/><ellipse cx="335.7" cy="351.1" rx="28.3" ry="3.1" stroke-width="1.95"/><ellipse cx="374.1" cy="351.1" rx="7.4" ry="3.1" stroke-width="1.95"/><ellipse cx="398.9" cy="351.1" rx="14.9" ry="3.1" stroke-width="1.95"/><ellipse cx="459.4" cy="351.1" rx="41.2" ry="3.1" stroke-width="1.95"/><ellipse cx="506.2" cy="351.1" rx="2.8" ry="3.1" stroke-width="1.95"/><ellipse cx="510.0" cy="351.1" rx="3.5" ry="3.1" stroke-width="1.95"/><ellipse cx="522.9" cy="351.1" rx="9.4" ry="3.1" stroke-width="1.95"/><ellipse cx="550.0" cy="351.1" rx="15.4" ry="3.1" stroke-width="1.95"/><ellipse cx="335.7" cy="357.6" rx="29.8" ry="2.05" stroke-width="1.55"/><ellipse cx="374.1" cy="357.6" rx="8.9" ry="2.05" stroke-width="1.55"/><ellipse cx="398.9" cy="357.6" rx="16.4" ry="2.05" stroke-width="1.55"/><ellipse cx="459.4" cy="357.6" rx="42.7" ry="2.05" stroke-width="1.55"/><ellipse cx="506.2" cy="357.6" rx="4.2" ry="2.05" stroke-width="1.55"/><ellipse cx="510.0" cy="357.6" rx="5.0" ry="2.05" stroke-width="1.55"/><ellipse cx="522.9" cy="357.6" rx="10.9" ry="2.05" stroke-width="1.55"/><ellipse cx="550.0" cy="357.6" rx="16.9" ry="2.05" stroke-width="1.55"/><path d="M304 359.9H567.5" stroke-width="1.8"/><path d="M307 355.7H566" stroke-width="1.1"/><circle cx="304.8" cy="357.9" r="1.9" stroke-width="1.4"/><path d="M566 357.9h3.5" stroke-width="2"/><ellipse cx="335.7" cy="363.9" rx="28.3" ry="3.1" stroke-width="1.95"/><ellipse cx="374.1" cy="363.9" rx="7.4" ry="3.1" stroke-width="1.95"/><ellipse cx="398.9" cy="363.9" rx="14.9" ry="3.1" stroke-width="1.95"/><ellipse cx="459.4" cy="363.9" rx="41.2" ry="3.1" stroke-width="1.95"/><ellipse cx="506.2" cy="363.9" rx="2.8" ry="3.1" stroke-width="1.95"/><ellipse cx="510.0" cy="363.9" rx="3.5" ry="3.1" stroke-width="1.95"/><ellipse cx="522.9" cy="363.9" rx="9.4" ry="3.1" stroke-width="1.95"/><ellipse cx="550.0" cy="363.9" rx="15.4" ry="3.1" stroke-width="1.95"/><ellipse cx="335.7" cy="370.4" rx="29.8" ry="2.05" stroke-width="1.55"/><ellipse cx="374.1" cy="370.4" rx="8.9" ry="2.05" stroke-width="1.55"/><ellipse cx="398.9" cy="370.4" rx="16.4" ry="2.05" stroke-width="1.55"/><ellipse cx="459.4" cy="370.4" rx="42.7" ry="2.05" stroke-width="1.55"/><ellipse cx="506.2" cy="370.4" rx="4.2" ry="2.05" stroke-width="1.55"/><ellipse cx="510.0" cy="370.4" rx="5.0" ry="2.05" stroke-width="1.55"/><ellipse cx="522.9" cy="370.4" rx="10.9" ry="2.05" stroke-width="1.55"/><ellipse cx="550.0" cy="370.4" rx="16.9" ry="2.05" stroke-width="1.55"/><path d="M304 372.7H567.5" stroke-width="1.8"/><path d="M307 368.5H566" stroke-width="1.1"/><circle cx="304.8" cy="370.7" r="1.9" stroke-width="1.4"/><path d="M566 370.7h3.5" stroke-width="2"/><ellipse cx="335.7" cy="376.7" rx="28.3" ry="3.1" stroke-width="1.95"/><ellipse cx="374.1" cy="376.7" rx="7.4" ry="3.1" stroke-width="1.95"/><ellipse cx="398.9" cy="376.7" rx="14.9" ry="3.1" stroke-width="1.95"/><ellipse cx="459.4" cy="376.7" rx="41.2" ry="3.1" stroke-width="1.95"/><ellipse cx="506.2" cy="376.7" rx="2.8" ry="3.1" stroke-width="1.95"/><ellipse cx="510.0" cy="376.7" rx="3.5" ry="3.1" stroke-width="1.95"/><ellipse cx="522.9" cy="376.7" rx="9.4" ry="3.1" stroke-width="1.95"/><ellipse cx="550.0" cy="376.7" rx="15.4" ry="3.1" stroke-width="1.95"/><ellipse cx="335.7" cy="383.2" rx="29.8" ry="2.05" stroke-width="1.55"/><ellipse cx="374.1" cy="383.2" rx="8.9" ry="2.05" stroke-width="1.55"/><ellipse cx="398.9" cy="383.2" rx="16.4" ry="2.05" stroke-width="1.55"/><ellipse cx="459.4" cy="383.2" rx="42.7" ry="2.05" stroke-width="1.55"/><ellipse cx="506.2" cy="383.2" rx="4.2" ry="2.05" stroke-width="1.55"/><ellipse cx="510.0" cy="383.2" rx="5.0" ry="2.05" stroke-width="1.55"/><ellipse cx="522.9" cy="383.2" rx="10.9" ry="2.05" stroke-width="1.55"/><ellipse cx="550.0" cy="383.2" rx="16.9" ry="2.05" stroke-width="1.55"/><path d="M304 385.5H567.5" stroke-width="1.8"/><path d="M307 381.3H566" stroke-width="1.1"/><circle cx="304.8" cy="383.5" r="1.9" stroke-width="1.4"/><path d="M566 383.5h3.5" stroke-width="2"/><ellipse cx="335.7" cy="389.5" rx="28.3" ry="3.1" stroke-width="1.95"/><ellipse cx="374.1" cy="389.5" rx="7.4" ry="3.1" stroke-width="1.95"/><ellipse cx="398.9" cy="389.5" rx="14.9" ry="3.1" stroke-width="1.95"/><ellipse cx="459.4" cy="389.5" rx="41.2" ry="3.1" stroke-width="1.95"/><ellipse cx="506.2" cy="389.5" rx="2.8" ry="3.1" stroke-width="1.95"/><ellipse cx="510.0" cy="389.5" rx="3.5" ry="3.1" stroke-width="1.95"/><ellipse cx="522.9" cy="389.5" rx="9.4" ry="3.1" stroke-width="1.95"/><ellipse cx="550.0" cy="389.5" rx="15.4" ry="3.1" stroke-width="1.95"/><ellipse cx="335.7" cy="396.0" rx="29.8" ry="2.05" stroke-width="1.55"/><ellipse cx="374.1" cy="396.0" rx="8.9" ry="2.05" stroke-width="1.55"/><ellipse cx="398.9" cy="396.0" rx="16.4" ry="2.05" stroke-width="1.55"/><ellipse cx="459.4" cy="396.0" rx="42.7" ry="2.05" stroke-width="1.55"/><ellipse cx="506.2" cy="396.0" rx="4.2" ry="2.05" stroke-width="1.55"/><ellipse cx="510.0" cy="396.0" rx="5.0" ry="2.05" stroke-width="1.55"/><ellipse cx="522.9" cy="396.0" rx="10.9" ry="2.05" stroke-width="1.55"/><ellipse cx="550.0" cy="396.0" rx="16.9" ry="2.05" stroke-width="1.55"/><path d="M304 398.3H567.5" stroke-width="1.8"/><path d="M307 394.1H566" stroke-width="1.1"/><circle cx="304.8" cy="396.3" r="1.9" stroke-width="1.4"/><path d="M566 396.3h3.5" stroke-width="2"/><ellipse cx="335.7" cy="402.3" rx="28.3" ry="3.1" stroke-width="1.95"/><ellipse cx="374.1" cy="402.3" rx="7.4" ry="3.1" stroke-width="1.95"/><ellipse cx="398.9" cy="402.3" rx="14.9" ry="3.1" stroke-width="1.95"/><ellipse cx="459.4" cy="402.3" rx="41.2" ry="3.1" stroke-width="1.95"/><ellipse cx="506.2" cy="402.3" rx="2.8" ry="3.1" stroke-width="1.95"/><ellipse cx="510.0" cy="402.3" rx="3.5" ry="3.1" stroke-width="1.95"/><ellipse cx="522.9" cy="402.3" rx="9.4" ry="3.1" stroke-width="1.95"/><ellipse cx="550.0" cy="402.3" rx="15.4" ry="3.1" stroke-width="1.95"/><ellipse cx="335.7" cy="408.8" rx="29.8" ry="2.05" stroke-width="1.55"/><ellipse cx="374.1" cy="408.8" rx="8.9" ry="2.05" stroke-width="1.55"/><ellipse cx="398.9" cy="408.8" rx="16.4" ry="2.05" stroke-width="1.55"/><ellipse cx="459.4" cy="408.8" rx="42.7" ry="2.05" stroke-width="1.55"/><ellipse cx="506.2" cy="408.8" rx="4.2" ry="2.05" stroke-width="1.55"/><ellipse cx="510.0" cy="408.8" rx="5.0" ry="2.05" stroke-width="1.55"/><ellipse cx="522.9" cy="408.8" rx="10.9" ry="2.05" stroke-width="1.55"/><ellipse cx="550.0" cy="408.8" rx="16.9" ry="2.05" stroke-width="1.55"/><path d="M304 411.1H567.5" stroke-width="1.8"/><path d="M307 406.9H566" stroke-width="1.1"/><circle cx="304.8" cy="409.1" r="1.9" stroke-width="1.4"/><path d="M566 409.1h3.5" stroke-width="2"/><ellipse cx="335.7" cy="415.1" rx="28.3" ry="3.1" stroke-width="1.95"/><ellipse cx="374.1" cy="415.1" rx="7.4" ry="3.1" stroke-width="1.95"/><ellipse cx="398.9" cy="415.1" rx="14.9" ry="3.1" stroke-width="1.95"/><ellipse cx="459.4" cy="415.1" rx="41.2" ry="3.1" stroke-width="1.95"/><ellipse cx="506.2" cy="415.1" rx="2.8" ry="3.1" stroke-width="1.95"/><ellipse cx="510.0" cy="415.1" rx="3.5" ry="3.1" stroke-width="1.95"/><ellipse cx="522.9" cy="415.1" rx="9.4" ry="3.1" stroke-width="1.95"/><ellipse cx="550.0" cy="415.1" rx="15.4" ry="3.1" stroke-width="1.95"/><ellipse cx="335.7" cy="421.6" rx="29.8" ry="2.05" stroke-width="1.55"/><ellipse cx="374.1" cy="421.6" rx="8.9" ry="2.05" stroke-width="1.55"/><ellipse cx="398.9" cy="421.6" rx="16.4" ry="2.05" stroke-width="1.55"/><ellipse cx="459.4" cy="421.6" rx="42.7" ry="2.05" stroke-width="1.55"/><ellipse cx="506.2" cy="421.6" rx="4.2" ry="2.05" stroke-width="1.55"/><ellipse cx="510.0" cy="421.6" rx="5.0" ry="2.05" stroke-width="1.55"/><ellipse cx="522.9" cy="421.6" rx="10.9" ry="2.05" stroke-width="1.55"/><ellipse cx="550.0" cy="421.6" rx="16.9" ry="2.05" stroke-width="1.55"/><path d="M304 423.9H567.5" stroke-width="1.8"/><path d="M307 419.7H566" stroke-width="1.1"/><circle cx="304.8" cy="421.9" r="1.9" stroke-width="1.4"/><path d="M566 421.9h3.5" stroke-width="2"/><ellipse cx="335.7" cy="427.9" rx="28.3" ry="3.1" stroke-width="1.95"/><ellipse cx="374.1" cy="427.9" rx="7.4" ry="3.1" stroke-width="1.95"/><ellipse cx="398.9" cy="427.9" rx="14.9" ry="3.1" stroke-width="1.95"/><ellipse cx="459.4" cy="427.9" rx="41.2" ry="3.1" stroke-width="1.95"/><ellipse cx="506.2" cy="427.9" rx="2.8" ry="3.1" stroke-width="1.95"/><ellipse cx="510.0" cy="427.9" rx="3.5" ry="3.1" stroke-width="1.95"/><ellipse cx="522.9" cy="427.9" rx="9.4" ry="3.1" stroke-width="1.95"/><ellipse cx="550.0" cy="427.9" rx="15.4" ry="3.1" stroke-width="1.95"/><ellipse cx="335.7" cy="434.4" rx="29.8" ry="2.05" stroke-width="1.55"/><ellipse cx="374.1" cy="434.4" rx="8.9" ry="2.05" stroke-width="1.55"/><ellipse cx="398.9" cy="434.4" rx="16.4" ry="2.05" stroke-width="1.55"/><ellipse cx="459.4" cy="434.4" rx="42.7" ry="2.05" stroke-width="1.55"/><ellipse cx="506.2" cy="434.4" rx="4.2" ry="2.05" stroke-width="1.55"/><ellipse cx="510.0" cy="434.4" rx="5.0" ry="2.05" stroke-width="1.55"/><ellipse cx="522.9" cy="434.4" rx="10.9" ry="2.05" stroke-width="1.55"/><ellipse cx="550.0" cy="434.4" rx="16.9" ry="2.05" stroke-width="1.55"/><path d="M304 436.7H567.5" stroke-width="1.8"/><path d="M307 432.5H566" stroke-width="1.1"/><circle cx="304.8" cy="434.7" r="1.9" stroke-width="1.4"/><path d="M566 434.7h3.5" stroke-width="2"/><ellipse cx="335.7" cy="440.7" rx="28.3" ry="3.1" stroke-width="1.95"/><ellipse cx="374.1" cy="440.7" rx="7.4" ry="3.1" stroke-width="1.95"/><ellipse cx="398.9" cy="440.7" rx="14.9" ry="3.1" stroke-width="1.95"/><ellipse cx="459.4" cy="440.7" rx="41.2" ry="3.1" stroke-width="1.95"/><ellipse cx="506.2" cy="440.7" rx="2.8" ry="3.1" stroke-width="1.95"/><ellipse cx="510.0" cy="440.7" rx="3.5" ry="3.1" stroke-width="1.95"/><ellipse cx="522.9" cy="440.7" rx="9.4" ry="3.1" stroke-width="1.95"/><ellipse cx="550.0" cy="440.7" rx="15.4" ry="3.1" stroke-width="1.95"/><ellipse cx="335.7" cy="447.2" rx="29.8" ry="2.05" stroke-width="1.55"/><ellipse cx="374.1" cy="447.2" rx="8.9" ry="2.05" stroke-width="1.55"/><ellipse cx="398.9" cy="447.2" rx="16.4" ry="2.05" stroke-width="1.55"/><ellipse cx="459.4" cy="447.2" rx="42.7" ry="2.05" stroke-width="1.55"/><ellipse cx="506.2" cy="447.2" rx="4.2" ry="2.05" stroke-width="1.55"/><ellipse cx="510.0" cy="447.2" rx="5.0" ry="2.05" stroke-width="1.55"/><ellipse cx="522.9" cy="447.2" rx="10.9" ry="2.05" stroke-width="1.55"/><ellipse cx="550.0" cy="447.2" rx="16.9" ry="2.05" stroke-width="1.55"/><path d="M304 449.5H567.5" stroke-width="1.8"/><path d="M307 445.3H566" stroke-width="1.1"/><circle cx="304.8" cy="447.5" r="1.9" stroke-width="1.4"/><path d="M566 447.5h3.5" stroke-width="2"/><ellipse cx="335.7" cy="453.5" rx="28.3" ry="3.1" stroke-width="1.95"/><ellipse cx="374.1" cy="453.5" rx="7.4" ry="3.1" stroke-width="1.95"/><ellipse cx="398.9" cy="453.5" rx="14.9" ry="3.1" stroke-width="1.95"/><ellipse cx="459.4" cy="453.5" rx="41.2" ry="3.1" stroke-width="1.95"/><ellipse cx="506.2" cy="453.5" rx="2.8" ry="3.1" stroke-width="1.95"/><ellipse cx="510.0" cy="453.5" rx="3.5" ry="3.1" stroke-width="1.95"/><ellipse cx="522.9" cy="453.5" rx="9.4" ry="3.1" stroke-width="1.95"/><ellipse cx="550.0" cy="453.5" rx="15.4" ry="3.1" stroke-width="1.95"/><ellipse cx="335.7" cy="460.0" rx="29.8" ry="2.05" stroke-width="1.55"/><ellipse cx="374.1" cy="460.0" rx="8.9" ry="2.05" stroke-width="1.55"/><ellipse cx="398.9" cy="460.0" rx="16.4" ry="2.05" stroke-width="1.55"/><ellipse cx="459.4" cy="460.0" rx="42.7" ry="2.05" stroke-width="1.55"/><ellipse cx="506.2" cy="460.0" rx="4.2" ry="2.05" stroke-width="1.55"/><ellipse cx="510.0" cy="460.0" rx="5.0" ry="2.05" stroke-width="1.55"/><ellipse cx="522.9" cy="460.0" rx="10.9" ry="2.05" stroke-width="1.55"/><ellipse cx="550.0" cy="460.0" rx="16.9" ry="2.05" stroke-width="1.55"/><path d="M304 462.3H567.5" stroke-width="1.8"/><path d="M307 458.1H566" stroke-width="1.1"/><circle cx="304.8" cy="460.3" r="1.9" stroke-width="1.4"/><path d="M566 460.3h3.5" stroke-width="2"/><ellipse cx="335.7" cy="466.3" rx="28.3" ry="3.1" stroke-width="1.95"/><ellipse cx="374.1" cy="466.3" rx="7.4" ry="3.1" stroke-width="1.95"/><ellipse cx="398.9" cy="466.3" rx="14.9" ry="3.1" stroke-width="1.95"/><ellipse cx="459.4" cy="466.3" rx="41.2" ry="3.1" stroke-width="1.95"/><ellipse cx="506.2" cy="466.3" rx="2.8" ry="3.1" stroke-width="1.95"/><ellipse cx="510.0" cy="466.3" rx="3.5" ry="3.1" stroke-width="1.95"/><ellipse cx="522.9" cy="466.3" rx="9.4" ry="3.1" stroke-width="1.95"/><ellipse cx="550.0" cy="466.3" rx="15.4" ry="3.1" stroke-width="1.95"/><ellipse cx="335.7" cy="472.8" rx="29.8" ry="2.05" stroke-width="1.55"/><ellipse cx="374.1" cy="472.8" rx="8.9" ry="2.05" stroke-width="1.55"/><ellipse cx="398.9" cy="472.8" rx="16.4" ry="2.05" stroke-width="1.55"/><ellipse cx="459.4" cy="472.8" rx="42.7" ry="2.05" stroke-width="1.55"/><ellipse cx="506.2" cy="472.8" rx="4.2" ry="2.05" stroke-width="1.55"/><ellipse cx="510.0" cy="472.8" rx="5.0" ry="2.05" stroke-width="1.55"/><ellipse cx="522.9" cy="472.8" rx="10.9" ry="2.05" stroke-width="1.55"/><ellipse cx="550.0" cy="472.8" rx="16.9" ry="2.05" stroke-width="1.55"/><path d="M304 475.1H567.5" stroke-width="1.8"/><path d="M307 470.9H566" stroke-width="1.1"/><circle cx="304.8" cy="473.1" r="1.9" stroke-width="1.4"/><path d="M566 473.1h3.5" stroke-width="2"/><ellipse cx="335.7" cy="479.1" rx="28.3" ry="3.1" stroke-width="1.95"/><ellipse cx="374.1" cy="479.1" rx="7.4" ry="3.1" stroke-width="1.95"/><ellipse cx="398.9" cy="479.1" rx="14.9" ry="3.1" stroke-width="1.95"/><ellipse cx="459.4" cy="479.1" rx="41.2" ry="3.1" stroke-width="1.95"/><ellipse cx="506.2" cy="479.1" rx="2.8" ry="3.1" stroke-width="1.95"/><ellipse cx="510.0" cy="479.1" rx="3.5" ry="3.1" stroke-width="1.95"/><ellipse cx="522.9" cy="479.1" rx="9.4" ry="3.1" stroke-width="1.95"/><ellipse cx="550.0" cy="479.1" rx="15.4" ry="3.1" stroke-width="1.95"/><ellipse cx="335.7" cy="485.6" rx="29.8" ry="2.05" stroke-width="1.55"/><ellipse cx="374.1" cy="485.6" rx="8.9" ry="2.05" stroke-width="1.55"/><ellipse cx="398.9" cy="485.6" rx="16.4" ry="2.05" stroke-width="1.55"/><ellipse cx="459.4" cy="485.6" rx="42.7" ry="2.05" stroke-width="1.55"/><ellipse cx="506.2" cy="485.6" rx="4.2" ry="2.05" stroke-width="1.55"/><ellipse cx="510.0" cy="485.6" rx="5.0" ry="2.05" stroke-width="1.55"/><ellipse cx="522.9" cy="485.6" rx="10.9" ry="2.05" stroke-width="1.55"/><ellipse cx="550.0" cy="485.6" rx="16.9" ry="2.05" stroke-width="1.55"/><path d="M304 487.9H567.5" stroke-width="1.8"/><path d="M307 483.7H566" stroke-width="1.1"/><circle cx="304.8" cy="485.9" r="1.9" stroke-width="1.4"/><path d="M566 485.9h3.5" stroke-width="2"/><ellipse cx="335.7" cy="491.9" rx="28.3" ry="3.1" stroke-width="1.95"/><ellipse cx="374.1" cy="491.9" rx="7.4" ry="3.1" stroke-width="1.95"/><ellipse cx="398.9" cy="491.9" rx="14.9" ry="3.1" stroke-width="1.95"/><ellipse cx="459.4" cy="491.9" rx="41.2" ry="3.1" stroke-width="1.95"/><ellipse cx="506.2" cy="491.9" rx="2.8" ry="3.1" stroke-width="1.95"/><ellipse cx="510.0" cy="491.9" rx="3.5" ry="3.1" stroke-width="1.95"/><ellipse cx="522.9" cy="491.9" rx="9.4" ry="3.1" stroke-width="1.95"/><ellipse cx="550.0" cy="491.9" rx="15.4" ry="3.1" stroke-width="1.95"/><ellipse cx="335.7" cy="498.4" rx="29.8" ry="2.05" stroke-width="1.55"/><ellipse cx="374.1" cy="498.4" rx="8.9" ry="2.05" stroke-width="1.55"/><ellipse cx="398.9" cy="498.4" rx="16.4" ry="2.05" stroke-width="1.55"/><ellipse cx="459.4" cy="498.4" rx="42.7" ry="2.05" stroke-width="1.55"/><ellipse cx="506.2" cy="498.4" rx="4.2" ry="2.05" stroke-width="1.55"/><ellipse cx="510.0" cy="498.4" rx="5.0" ry="2.05" stroke-width="1.55"/><ellipse cx="522.9" cy="498.4" rx="10.9" ry="2.05" stroke-width="1.55"/><ellipse cx="550.0" cy="498.4" rx="16.9" ry="2.05" stroke-width="1.55"/><path d="M304 500.7H567.5" stroke-width="1.8"/><path d="M307 496.5H566" stroke-width="1.1"/><circle cx="304.8" cy="498.7" r="1.9" stroke-width="1.4"/><path d="M566 498.7h3.5" stroke-width="2"/><ellipse cx="335.5" cy="511.5" rx="28.5" ry="9.6"/><ellipse cx="336.0" cy="511.5" rx="24.0" ry="9.6"/><ellipse cx="375.0" cy="511.5" rx="9.0" ry="9.6"/><ellipse cx="413.0" cy="511.5" rx="27.0" ry="9.6"/><ellipse cx="399.0" cy="511.5" rx="15.0" ry="9.6"/><ellipse cx="444.0" cy="511.5" rx="26.0" ry="9.6"/><ellipse cx="470.0" cy="511.5" rx="30.0" ry="9.6"/><ellipse cx="495.0" cy="511.5" rx="25.0" ry="9.6"/><ellipse cx="519.5" cy="511.5" rx="14.5" ry="9.6"/><ellipse cx="550.0" cy="511.5" rx="16.0" ry="9.6"/><ellipse cx="540.0" cy="511.5" rx="20.0" ry="9.6"/><path d="M387.0 521C387.0 475.8 408.4 475.8 408.4 521"/><path d="M319.7 521C319.7 460.1 355.0 460.1 355.0 521"/><path d="M316.8 521C316.8 442.1 351.1 442.1 351.1 521"/><path d="M414.8 521C414.8 445.0 433.3 445.0 433.3 521"/><path d="M399.0 521C399.0 446.8 444.8 446.8 444.8 521"/><path d="M354.3 521C354.3 492.1 392.9 492.1 392.9 521"/><path d="M443.4 521C443.4 493.7 473.6 493.7 473.6 521"/><path d="M307.7 521C307.7 455.9 354.6 455.9 354.6 521"/><path d="M344.5 521C344.5 457.0 364.7 457.0 364.7 521"/><path d="M504.6 521C504.6 472.0 527.1 472.0 527.1 521"/><path d="M458.6 521C458.6 470.1 488.0 470.1 488.0 521"/><path d="M326.0 521C326.0 451.3 344.1 451.3 344.1 521"/><path d="M467.6 521C467.6 457.3 499.0 457.3 499.0 521"/><path d="M444.4 521C444.4 456.5 476.7 456.5 476.7 521"/><path d="M490.1 521C490.1 453.4 531.2 453.4 531.2 521"/><path d="M440.4 521C440.4 488.1 475.3 488.1 475.3 521"/><path d="M481.9 521C481.9 493.9 508.2 493.9 508.2 521"/><path d="M332.8 521C332.8 481.6 363.9 481.6 363.9 521"/><path d="M339.7 521C339.7 442.2 373.3 442.2 373.3 521"/><path d="M458.6 521C458.6 471.5 502.1 471.5 502.1 521"/><path d="M516.5 521C516.5 478.2 543.8 478.2 543.8 521"/><path d="M444.2 521C444.2 465.1 481.1 465.1 481.1 521"/><path d="M351.2 475.0V521" stroke-width="1.2"/><path d="M338.8 488.0V521" stroke-width="1.2"/><path d="M554.9 494.8V521" stroke-width="1.2"/><path d="M417.0 498.6V521" stroke-width="1.2"/><path d="M433.3 474.3V521" stroke-width="1.2"/><path d="M367.6 476.1V521" stroke-width="1.2"/><path d="M395.8 455.4V521" stroke-width="1.2"/><path d="M390.6 500.3V521" stroke-width="1.2"/><path d="M494.1 473.6V521" stroke-width="1.2"/><path d="M516.9 455.8V521" stroke-width="1.2"/><path d="M475.1 463.9V521" stroke-width="1.2"/><path d="M476.8 486.9V521" stroke-width="1.2"/><path d="M476.4 456.6V521" stroke-width="1.2"/><path d="M361.1 485.5V521" stroke-width="1.2"/><path d="M321.8 481.6V521" stroke-width="1.2"/><path d="M410.9 456.3V521" stroke-width="1.2"/><path d="M518.2 480.3V521" stroke-width="1.2"/><path d="M368.7 477.4V521" stroke-width="1.2"/><path d="M550.2 490.2V521" stroke-width="1.2"/><path d="M505.6 492.5V521" stroke-width="1.2"/><path d="M518.5 470.7V521" stroke-width="1.2"/><path d="M344.7 470.8V521" stroke-width="1.2"/><path d="M385.9 459.9V521" stroke-width="1.2"/><path d="M360.5 482.2V521" stroke-width="1.2"/><path d="M338.0 456.6V521" stroke-width="1.2"/><path d="M351.3 483.0V521" stroke-width="1.2"/><path d="M350.2 483.0V521" stroke-width="1.2"/><path d="M367.9 502.5V521" stroke-width="1.2"/><path d="M546.1 455.0V521" stroke-width="1.2"/><path d="M506.9 474.6V521" stroke-width="1.2"/><path d="M497.4 456.2V521" stroke-width="1.2"/><path d="M443.4 475.3V521" stroke-width="1.2"/><path d="M366.2 459.7V521" stroke-width="1.2"/><path d="M518.1 487.3V521" stroke-width="1.2"/><path d="M325.6 465.0V521" stroke-width="1.2"/><path d="M347.7 462.9V521" stroke-width="1.2"/><path d="M445.7 468.3V521" stroke-width="1.2"/><path d="M392.5 492.4V521" stroke-width="1.2"/><path d="M441.9 483.0V521" stroke-width="1.2"/><path d="M396.3 494.6V521" stroke-width="1.2"/><path d="M387.8 476.1V521" stroke-width="1.2"/><path d="M328.9 493.0V521" stroke-width="1.2"/><path d="M496.6 487.5V521" stroke-width="1.2"/><path d="M439.3 501.4V521" stroke-width="1.2"/><path d="M446.4 468.8V521" stroke-width="1.2"/><path d="M386.4 474.8V521" stroke-width="1.2"/><path d="M435.9 483.6V521" stroke-width="1.2"/><path d="M552.8 475.3V521" stroke-width="1.2"/><path d="M444.2 452.8V521" stroke-width="1.2"/><path d="M350.7 492.6V521" stroke-width="1.2"/><path d="M391.7 458.2V521" stroke-width="1.2"/><path d="M434.2 501.9V521" stroke-width="1.2"/><path d="M469.5 490.4V521" stroke-width="1.2"/><path d="M348.1 457.7V521" stroke-width="1.2"/><path d="M359.4 481.7V521" stroke-width="1.2"/><path d="M504.3 456.3V521" stroke-width="1.2"/><path d="M554.7 485.5V521" stroke-width="1.2"/><path d="M435.2 479.3V521" stroke-width="1.2"/><path d="M315.2 503.3V521" stroke-width="1.2"/><path d="M345.4 501.2V521" stroke-width="1.2"/><path d="M476.8 459.1V521" stroke-width="1.2"/><path d="M385.4 460.1V521" stroke-width="1.2"/><path d="M516.4 481.4V521" stroke-width="1.2"/><path d="M414.6 495.5V521" stroke-width="1.2"/><path d="M327.7 468.2V521" stroke-width="1.2"/><path d="M502.3 494.5V521" stroke-width="1.2"/><ellipse cx="443.7" cy="493.9" rx="26.2" ry="2.4"/><ellipse cx="363.4" cy="493.6" rx="19.2" ry="4.3"/><ellipse cx="463.9" cy="457.5" rx="25.1" ry="2.4"/><ellipse cx="466.2" cy="453.1" rx="10.6" ry="4.0"/><ellipse cx="446.8" cy="488.8" rx="18.6" ry="4.6"/><ellipse cx="342.5" cy="452.1" rx="12.2" ry="2.3"/><ellipse cx="429.5" cy="494.7" rx="8.6" ry="2.2"/><ellipse cx="401.6" cy="480.3" rx="29.4" ry="2.6"/><ellipse cx="391.0" cy="490.4" rx="19.2" ry="3.5"/><ellipse cx="384.5" cy="493.8" rx="19.5" ry="4.8"/><ellipse cx="533.0" cy="460.1" rx="27.6" ry="3.3"/><ellipse cx="421.7" cy="465.8" rx="16.6" ry="4.0"/><ellipse cx="424.2" cy="465.1" rx="12.7" ry="2.4"/><ellipse cx="500.9" cy="482.2" rx="28.7" ry="3.1"/><path d="M564 448.4H597" stroke-width="2.0"/><path d="M566 450.6H596" stroke-width="1.2"/><path d="M567.5 468C569 456 575 450.5 582 450.5C591 450.5 599 458 604 472C608 482 610 490 611 497"/><path d="M599.4 449.5C604 462 609 478 612 494"/><path d="M568 448V522" stroke-width="1.8"/><path d="M570.5 452V522" stroke-width="1.1"/><path d="M598.5 469.6H693" stroke-width="2.2"/><path d="M598.5 472.2H693" stroke-width="1.2"/><path d="M566 482.8H700" stroke-width="1.9"/><path d="M566 485H660" stroke-width="1.1"/><ellipse cx="622.0" cy="474.4" rx="23.3" ry="3.8" stroke-width="1.7"/><ellipse cx="683.0" cy="474.4" rx="18.3" ry="3.6" stroke-width="1.7"/><ellipse cx="622.0" cy="481.2" rx="23.3" ry="3.0" stroke-width="1.5"/><ellipse cx="640.0" cy="477.8" rx="40.0" ry="2.2" stroke-width="1.1"/><ellipse cx="585.0" cy="489.3" rx="16.2" ry="4.0" stroke-width="1.6"/><ellipse cx="623.0" cy="489.3" rx="21.0" ry="4.0" stroke-width="1.6"/><ellipse cx="604.0" cy="493.5" rx="34.0" ry="2.4" stroke-width="1.1"/><path d="M566 496.4H700" stroke-width="1.6"/><path d="M566 502H700" stroke-width="1.3"/><path d="M575 508H690" stroke-width="1.1"/><rect x="645.4" y="470" width="9.2" height="52" stroke-width="1.5"/><path d="M648 470V522M650 470V522M652 470V522" stroke-width="1.5"/><ellipse cx="650.0" cy="474.0" rx="4.3" ry="1.8" stroke-width="1.0"/><ellipse cx="650.0" cy="479.0" rx="4.3" ry="1.8" stroke-width="1.0"/><ellipse cx="650.0" cy="484.0" rx="4.3" ry="1.8" stroke-width="1.0"/><ellipse cx="650.0" cy="489.0" rx="4.3" ry="1.8" stroke-width="1.0"/><ellipse cx="650.0" cy="494.0" rx="4.3" ry="1.8" stroke-width="1.0"/><ellipse cx="650.0" cy="499.0" rx="4.3" ry="1.8" stroke-width="1.0"/><ellipse cx="650.0" cy="504.0" rx="4.3" ry="1.8" stroke-width="1.0"/><ellipse cx="650.0" cy="509.0" rx="4.3" ry="1.8" stroke-width="1.0"/><ellipse cx="650.0" cy="514.0" rx="4.3" ry="1.8" stroke-width="1.0"/><ellipse cx="650.0" cy="519.0" rx="4.3" ry="1.8" stroke-width="1.0"/><path d="M674.0 522A14 14 0 0 1 686.6 508.1" stroke-width="1.3"/><path d="M668.0 522A20 20 0 0 1 686.0 502.2" stroke-width="1.3"/><path d="M662.0 522A26 26 0 0 1 685.4 496.3" stroke-width="1.3"/><path d="M656.0 522A32 32 0 0 1 684.8 490.3" stroke-width="1.3"/><ellipse cx="668.0" cy="514.0" rx="6.0" ry="6.0"/><ellipse cx="668.0" cy="514.0" rx="3.2" ry="3.2"/><ellipse cx="687.0" cy="507.0" rx="8.5" ry="8.5"/><ellipse cx="687.0" cy="507.0" rx="5.4" ry="5.4"/><ellipse cx="687.0" cy="507.0" rx="2.4" ry="2.4"/><ellipse cx="676.0" cy="516.0" rx="5.0" ry="5.0"/><ellipse cx="587.5" cy="513.5" rx="11.0" ry="7.5" stroke-width="1.6"/><ellipse cx="627.0" cy="513.5" rx="12.5" ry="7.5" stroke-width="1.6"/><ellipse cx="606.0" cy="515.0" rx="8.0" ry="5.5"/><ellipse cx="640.0" cy="514.0" rx="6.0" ry="7.0"/><ellipse cx="597.0" cy="512.0" rx="20.0" ry="9.0"/><rect x="612" y="497" width="33" height="25" stroke-width="1.5"/><rect x="572" y="503" width="27" height="19"/><rect x="656" y="497" width="36" height="25"/><path d="M573.3 483V522" stroke-width="1.1"/><path d="M580.0 497V522" stroke-width="1.1"/><path d="M590.0 497V522" stroke-width="1.1"/><path d="M599.8 470V522" stroke-width="1.3"/><path d="M602.5 470V522" stroke-width="1.3"/><path d="M607.6 483V522" stroke-width="1.1"/><path d="M613.0 483V522" stroke-width="1.1"/><path d="M620.0 497V522" stroke-width="1.1"/><path d="M630.0 483V522" stroke-width="1.1"/><path d="M638.0 497V522" stroke-width="1.1"/><path d="M660.0 483V522" stroke-width="1.1"/><path d="M664.0 497V522" stroke-width="1.1"/><path d="M672.0 470V522" stroke-width="1.3"/><path d="M681.0 483V522" stroke-width="1.1"/><path d="M693.0 466V522" stroke-width="1.1"/><path d="M696.0 470V522" stroke-width="1.3"/><path d="M700.0 470V522" stroke-width="1.3"/><ellipse cx="602.4" cy="508.1" rx="5.4" ry="7.7" stroke-width="1.1"/><ellipse cx="583.3" cy="504.8" rx="12.8" ry="7.3" stroke-width="1.1"/><ellipse cx="598.8" cy="513.9" rx="11.1" ry="6.0" stroke-width="1.1"/><ellipse cx="622.6" cy="504.0" rx="7.6" ry="5.8" stroke-width="1.1"/><ellipse cx="612.6" cy="510.7" rx="8.6" ry="5.9" stroke-width="1.1"/><ellipse cx="634.1" cy="513.6" rx="7.0" ry="4.6" stroke-width="1.1"/><ellipse cx="682.2" cy="512.6" rx="6.3" ry="4.4" stroke-width="1.1"/><ellipse cx="604.6" cy="505.0" rx="13.1" ry="7.8" stroke-width="1.1"/><ellipse cx="670.4" cy="510.4" rx="12.5" ry="8.7" stroke-width="1.1"/><ellipse cx="620.7" cy="508.7" rx="9.4" ry="6.5" stroke-width="1.1"/><ellipse cx="611.2" cy="511.8" rx="6.8" ry="4.9" stroke-width="1.1"/><ellipse cx="679.4" cy="503.2" rx="6.7" ry="4.4" stroke-width="1.1"/><ellipse cx="603.3" cy="505.4" rx="10.1" ry="5.3" stroke-width="1.1"/><ellipse cx="586.6" cy="513.9" rx="4.1" ry="6.1" stroke-width="1.1"/><path d="M681.7 489V522" stroke-width="1.0"/><path d="M575.3 489V522" stroke-width="1.0"/><path d="M684.5 489V522" stroke-width="1.0"/><path d="M602.0 489V522" stroke-width="1.0"/><path d="M594.6 497V522" stroke-width="1.0"/><path d="M646.7 489V522" stroke-width="1.0"/><path d="M605.4 489V522" stroke-width="1.0"/><path d="M603.0 483V522" stroke-width="1.0"/><path d="M691.3 483V522" stroke-width="1.0"/><path d="M571.9 489V522" stroke-width="1.0"/><path d="M632.7 489V522" stroke-width="1.0"/><path d="M684.0 483V522" stroke-width="1.0"/><path d="M650.3 502V522" stroke-width="1.0"/><path d="M650.1 502V522" stroke-width="1.0"/><path d="M692.5 466.4H788" stroke-width="2.2"/><path d="M692.5 468.8H788" stroke-width="1.2"/><path d="M694 471.6H788" stroke-width="1.5"/><rect x="713.8" y="450.2" width="59.8" height="8.6" rx="4.3" stroke-width="1.7"/><ellipse cx="722.0" cy="454.5" rx="6.5" ry="3.3" stroke-width="1.4"/><ellipse cx="733.0" cy="454.5" rx="3.4" ry="3.3" stroke-width="1.4"/><ellipse cx="741.0" cy="454.5" rx="3.0" ry="3.3" stroke-width="1.4"/><ellipse cx="748.0" cy="454.5" rx="3.4" ry="3.3" stroke-width="1.4"/><ellipse cx="763.8" cy="454.5" rx="9.2" ry="3.3" stroke-width="1.4"/><path d="M773 458.2H788M776 460.4H788" stroke-width="1.1"/><path d="M713.8 456V466.4M773.6 456L778 466.4" stroke-width="1.3"/><ellipse cx="730.0" cy="462.6" rx="15.0" ry="3.0" stroke-width="1.5"/><ellipse cx="761.5" cy="462.6" rx="13.5" ry="3.0" stroke-width="1.5"/><ellipse cx="745.0" cy="462.6" rx="30.0" ry="2.2" stroke-width="1.0"/><path d="M700 462.6H788" stroke-width="1.2"/><ellipse cx="726.0" cy="496.0" rx="11.0" ry="23.0" stroke-width="1.4"/><ellipse cx="726.0" cy="497.0" rx="7.0" ry="19.0" stroke-width="1.4"/><ellipse cx="748.0" cy="496.0" rx="10.0" ry="23.0" stroke-width="1.4"/><ellipse cx="748.0" cy="498.0" rx="5.5" ry="18.0" stroke-width="1.4"/><ellipse cx="737.0" cy="497.0" rx="9.0" ry="21.0" stroke-width="1.4"/><ellipse cx="771.5" cy="496.0" rx="16.5" ry="24.0" stroke-width="1.4"/><ellipse cx="775.0" cy="495.0" rx="10.0" ry="15.0" stroke-width="1.4"/><ellipse cx="760.0" cy="497.0" rx="8.0" ry="22.0" stroke-width="1.4"/><ellipse cx="784.0" cy="497.0" rx="9.0" ry="22.0" stroke-width="1.4"/><ellipse cx="704.0" cy="500.0" rx="8.0" ry="19.0" stroke-width="1.4"/><ellipse cx="712.0" cy="498.0" rx="7.0" ry="21.0" stroke-width="1.4"/><ellipse cx="768.0" cy="484.0" rx="5.0" ry="5.0" stroke-width="1.4"/><ellipse cx="781.0" cy="486.0" rx="4.5" ry="4.5" stroke-width="1.4"/><path d="M700.0 476.0H788" stroke-width="1.2"/><path d="M696.0 479.5H788" stroke-width="1.2"/><path d="M700.0 483.0H788" stroke-width="1.2"/><path d="M692.5 489.7H788" stroke-width="1.2"/><path d="M692.5 496.4H788" stroke-width="1.2"/><path d="M696.0 503.0H788" stroke-width="1.2"/><path d="M692.5 509.5H788" stroke-width="1.2"/><path d="M700.0 516.0H788" stroke-width="1.2"/><path d="M762.5 471.6V521.5" stroke-width="1.1"/><path d="M787.0 499.4V521.5" stroke-width="1.1"/><path d="M772.7 467.5V521.5" stroke-width="1.1"/><path d="M752.8 496.0V521.5" stroke-width="1.1"/><path d="M734.5 468.8V521.5" stroke-width="1.1"/><path d="M756.5 479.6V521.5" stroke-width="1.1"/><path d="M741.6 499.0V521.5" stroke-width="1.1"/><path d="M750.3 489.9V521.5" stroke-width="1.1"/><path d="M698.3 473.1V521.5" stroke-width="1.1"/><path d="M719.3 467.1V521.5" stroke-width="1.1"/><path d="M728.2 477.9V521.5" stroke-width="1.1"/><path d="M786.6 477.7V521.5" stroke-width="1.1"/><path d="M697.2 496.1V521.5" stroke-width="1.1"/><path d="M714.5 473.0V521.5" stroke-width="1.1"/><path d="M725.5 469.8V521.5" stroke-width="1.1"/><path d="M720.2 488.6V521.5" stroke-width="1.1"/><path d="M717.3 492.6V521.5" stroke-width="1.1"/><path d="M702.5 494.0V521.5" stroke-width="1.1"/><path d="M707.5 486.4V521.5" stroke-width="1.1"/><path d="M731.0 476.9V521.5" stroke-width="1.1"/><path d="M753.2 469.8V521.5" stroke-width="1.1"/><path d="M784.0 495.2V521.5" stroke-width="1.1"/><path d="M708.6 496.5V521.5" stroke-width="1.1"/><path d="M767.7 486.7V521.5" stroke-width="1.1"/><path d="M765.8 490.8V521.5" stroke-width="1.1"/><path d="M740.5 476.4V521.5" stroke-width="1.1"/><path d="M752.2 471.8V521.5" stroke-width="1.1"/><path d="M771.5 490.6V521.5" stroke-width="1.1"/><path d="M742.2 481.2V521.5" stroke-width="1.1"/><path d="M759.9 483.7V521.5" stroke-width="1.1"/><path d="M779.5 491.8V521.5" stroke-width="1.1"/><path d="M747.4 493.8V521.5" stroke-width="1.1"/><path d="M695.5 489.7V521.5" stroke-width="1.1"/><path d="M769.0 490.5V521.5" stroke-width="1.1"/><path d="M783.9 488.2V521.5" stroke-width="1.1"/><path d="M702.0 468.4V521.5" stroke-width="1.1"/><ellipse cx="754.8" cy="504.5" rx="9.8" ry="7.3" stroke-width="1.1"/><ellipse cx="704.4" cy="506.4" rx="4.1" ry="6.2" stroke-width="1.1"/><ellipse cx="722.7" cy="500.8" rx="6.7" ry="9.7" stroke-width="1.1"/><ellipse cx="777.2" cy="506.3" rx="4.6" ry="8.7" stroke-width="1.1"/><ellipse cx="740.8" cy="510.2" rx="8.9" ry="6.2" stroke-width="1.1"/><ellipse cx="765.1" cy="507.8" rx="5.4" ry="7.3" stroke-width="1.1"/><ellipse cx="772.7" cy="510.9" rx="4.5" ry="6.4" stroke-width="1.1"/><ellipse cx="704.0" cy="502.4" rx="7.8" ry="8.0" stroke-width="1.1"/><ellipse cx="728.5" cy="508.3" rx="7.9" ry="8.1" stroke-width="1.1"/><ellipse cx="711.5" cy="505.8" rx="6.9" ry="9.9" stroke-width="1.1"/><path d="M692.5 466.4V522" stroke-width="1.6"/><path d="M146 522.8H788" stroke-width="2.2"/><path d="M146 552.6H788" stroke-width="1.9"/><path d="M146 525.2H470" stroke-width="1"/><path d="M146 538.5H466" stroke-width="1.1"/><path d="M146 527.2C260 524.6 400 524.8 469 526" stroke-width="1"/><path d="M146 530C250 527 380 527 440 530.5C458 532 466 535 468 538"/><path d="M146 548C200 551 260 552 300 552.3C380 552 440 548 467.5 537" stroke-width="1.3"/><path d="M469 523V552.5" stroke-width="1.5"/><path d="M148.0 538.5Q153.0 530 167.0 525.5" stroke-width="0.85"/><path d="M155.2 538.5Q160.2 530 174.2 525.5" stroke-width="0.85"/><path d="M162.4 538.5Q167.4 530 181.4 525.5" stroke-width="0.85"/><path d="M169.6 538.5Q174.6 530 188.6 525.5" stroke-width="0.85"/><path d="M176.8 538.5Q181.8 530 195.8 525.5" stroke-width="0.85"/><path d="M184.0 538.5Q189.0 530 203.0 525.5" stroke-width="0.85"/><path d="M191.2 538.5Q196.2 530 210.2 525.5" stroke-width="0.85"/><path d="M198.4 538.5Q203.4 530 217.4 525.5" stroke-width="0.85"/><path d="M205.6 538.5Q210.6 530 224.6 525.5" stroke-width="0.85"/><path d="M212.8 538.5Q217.8 530 231.8 525.5" stroke-width="0.85"/><path d="M220.0 538.5Q225.0 530 239.0 525.5" stroke-width="0.85"/><path d="M227.2 538.5Q232.2 530 246.2 525.5" stroke-width="0.85"/><path d="M234.4 538.5Q239.4 530 253.4 525.5" stroke-width="0.85"/><path d="M241.6 538.5Q246.6 530 260.6 525.5" stroke-width="0.85"/><path d="M248.8 538.5Q253.8 530 267.8 525.5" stroke-width="0.85"/><path d="M256.0 538.5Q261.0 530 275.0 525.5" stroke-width="0.85"/><path d="M263.2 538.5Q268.2 530 282.2 525.5" stroke-width="0.85"/><path d="M270.4 538.5Q275.4 530 289.4 525.5" stroke-width="0.85"/><path d="M277.6 538.5Q282.6 530 296.6 525.5" stroke-width="0.85"/><path d="M284.8 538.5Q289.8 530 303.8 525.5" stroke-width="0.85"/><path d="M292.0 538.5Q297.0 530 311.0 525.5" stroke-width="0.85"/><path d="M299.2 538.5Q304.2 530 318.2 525.5" stroke-width="0.85"/><path d="M303.0 538.5Q314.0 533.5 312.0 524.5" stroke-width="0.9"/><path d="M318.5 538.5Q329.5 533.5 327.5 524.5" stroke-width="0.9"/><path d="M333.4 538.5Q344.4 533.5 342.4 524.5" stroke-width="0.9"/><path d="M347.7 538.5Q358.7 533.5 356.7 524.5" stroke-width="0.9"/><path d="M361.4 538.5Q372.4 533.5 370.4 524.5" stroke-width="0.9"/><path d="M374.5 538.5Q385.5 533.5 383.5 524.5" stroke-width="0.9"/><path d="M387.0 538.5Q398.0 533.5 396.0 524.5" stroke-width="0.9"/><path d="M398.9 538.5Q409.9 533.5 407.9 524.5" stroke-width="0.9"/><path d="M410.2 538.5Q421.2 533.5 419.2 524.5" stroke-width="0.9"/><path d="M420.9 538.5Q431.9 533.5 429.9 524.5" stroke-width="0.9"/><path d="M431.0 538.5Q442.0 533.5 440.0 524.5" stroke-width="0.9"/><path d="M440.5 538.5Q451.5 533.5 449.5 524.5" stroke-width="0.9"/><path d="M449.4 538.5Q460.4 533.5 458.4 524.5" stroke-width="0.9"/><path d="M457.9 538.5Q468.9 533.5 466.9 524.5" stroke-width="0.9"/><path d="M146.0 538.5V552.5" stroke-width="1.15"/><path d="M157.0 538.5V552.5" stroke-width="1.15"/><path d="M172.0 538.5V552.5" stroke-width="1.15"/><path d="M186.0 538.5V552.5" stroke-width="1.15"/><path d="M200.0 538.5V552.5" stroke-width="1.15"/><path d="M210.0 538.5V552.5" stroke-width="1.15"/><path d="M220.0 538.5V552.5" stroke-width="1.15"/><path d="M228.5 538.5V552.5" stroke-width="1.15"/><path d="M236.0 538.5V552.5" stroke-width="1.15"/><path d="M239.0 538.5V552.5" stroke-width="1.15"/><path d="M242.0 538.5V552.5" stroke-width="1.15"/><path d="M245.0 538.5V552.5" stroke-width="1.15"/><path d="M248.0 538.5V552.5" stroke-width="1.15"/><path d="M256.0 538.5V552.5" stroke-width="1.15"/><path d="M265.0 538.5V552.5" stroke-width="1.15"/><path d="M275.0 538.5V552.5" stroke-width="1.15"/><path d="M286.0 538.5V552.5" stroke-width="1.15"/><path d="M300.0 538.5V552.5" stroke-width="1.15"/><path d="M316.0 538.5V552.5" stroke-width="1.15"/><path d="M331.0 538.5V552.5" stroke-width="1.15"/><path d="M347.0 538.5V552.5" stroke-width="1.15"/><path d="M365.0 538.5V552.5" stroke-width="1.15"/><path d="M381.0 538.5V552.5" stroke-width="1.15"/><path d="M393.5 538.5V552.5" stroke-width="1.15"/><path d="M403.5 538.5V552.5" stroke-width="1.15"/><path d="M413.6 538.5V552.5" stroke-width="1.15"/><path d="M422.5 538.5V552.5" stroke-width="1.15"/><path d="M431.0 538.5V552.5" stroke-width="1.15"/><path d="M439.8 538.5V552.5" stroke-width="1.15"/><path d="M447.3 538.5V552.5" stroke-width="0.90"/><path d="M453.6 538.5V552.5" stroke-width="0.90"/><path d="M458.8 538.5V552.5" stroke-width="0.90"/><path d="M463.4 538.5V552.5" stroke-width="0.90"/><path d="M466.8 538.5V552.5" stroke-width="0.90"/><path d="M289 523V552.5" stroke-width="1.4"/><ellipse cx="560" cy="537.8" rx="87.5" ry="14.8" stroke-width="1.7"/><path d="M474 541C480 548 510 552 545 552.4" stroke-width="1.2"/><path d="M474 534C478 528 488 525.5 500 524.6M476.5 536C481 529.5 492 526.5 506 525.4M479 538C484 531 497 527.6 512 526.2" stroke-width="1.05"/><path d="M473 530C480 526 500 524.5 520 524.3" /><ellipse cx="760" cy="537.8" rx="109" ry="14.8" stroke-width="1.7"/></g></svg></div>
<div class="abs " style="left:131px;top:79.2px;width:30.3px;height:18.4px;background:#989898"></div>
<div class="abs " style="left:162.5px;top:79.2px;width:15.3px;height:18.4px;background:#989898"></div>
<div class="t" style="left:135px;top:80.375px;font-size:11.9px;height:17.85px;line-height:17.85px;color:#fff;font-weight:bold">Top</div>
<div class="abs " style="left:166px;top:86.8px;width:0px;height:0px;border-left:4.1px solid transparent;border-right:4.1px solid transparent;border-top:4.5px solid #fff"></div>
<div class="abs " style="left:129px;top:597.6px;width:642px;height:25.8px;background:#3b3b3b"></div>
<svg class="abs" style="left:139px;top:603px;overflow:visible" width="16" height="14" viewBox="-8 -7 16 14"><rect x="-7.5" y="-6" width="15" height="12" fill="none" stroke="#8d8d8d" stroke-width="1.1"/><path d="M0 -6V6M-7.5 0H7.5" stroke="#8d8d8d" stroke-width="1.1"/></svg>
<div class="abs " style="left:171px;top:603.2px;width:16px;height:13.4px;border:1.2px solid #2f7fd6;border-radius:1.5px"></div>
<div class="abs " style="left:201px;top:604px;width:1px;height:12px;background:#6b6b6b"></div>
<div class="abs " style="left:312.5px;top:604px;width:1px;height:12px;background:#6b6b6b"></div>
<div class="abs " style="left:374px;top:604px;width:1px;height:12px;background:#6b6b6b"></div>
<div class="abs " style="left:446px;top:604px;width:1px;height:12px;background:#6b6b6b"></div>
<div class="abs " style="left:518px;top:604px;width:1px;height:12px;background:#6b6b6b"></div>
<div class="t" style="left:220.5px;top:599.175px;font-size:13.5px;height:20.25px;line-height:20.25px;color:#a4a4a4;">Perspective</div>
<div class="t" style="left:332px;top:599.175px;font-size:13.5px;height:20.25px;line-height:20.25px;color:#2f86e3;">Top</div>
<div class="t" style="left:394px;top:599.175px;font-size:13.5px;height:20.25px;line-height:20.25px;color:#a4a4a4;">Front</div>
<div class="t" style="left:466px;top:599.175px;font-size:13.5px;height:20.25px;line-height:20.25px;color:#a4a4a4;">Right</div>
<div class="t" style="left:538px;top:600.525px;font-size:13px;height:19.5px;line-height:19.5px;color:#a4a4a4;">图纸配置</div>
<div class="abs " style="left:0px;top:623.4px;width:1006px;height:26px;background:#303030"></div>
<svg class="abs" style="left:4.5px;top:629.5px;overflow:visible" width="14" height="14" viewBox="-7 -7 14 14"><rect x="-5.7" y="-5.5" width="11.4" height="11.2" fill="none" stroke="#bdbdbd" stroke-width="1.6"/><rect x="-5.7" y="-5.5" width="4" height="11.2" fill="#bdbdbd"/></svg>
<svg class="abs" style="left:23px;top:629.5px;overflow:visible" width="16" height="14" viewBox="-8 -7 16 14"><path d="M-3.5 -5.3H7M-3.5 0H7M-3.5 5.3H7" stroke="#c9c9c9" stroke-width="1.5"/><path d="M-7 -5.3h1.6M-7 0h1.6M-7 5.3h1.6" stroke="#c9c9c9" stroke-width="1.5"/></svg>
<div class="t" style="left:56px;top:629.872px;font-size:11.3px;height:16.95px;line-height:16.95px;color:#b4b4b4;">工作平面</div>
<div class="t" style="left:149px;top:628.538px;font-size:11.95px;height:17.925px;line-height:17.925px;color:#b4b4b4;">X -64.866 Y 4.091 Z 0</div>
<div class="t" style="left:314px;top:628.538px;font-size:11.95px;height:17.925px;line-height:17.925px;color:#b4b4b4;">Centimeters</div>
<div class="abs " style="left:400.5px;top:628.5px;width:15px;height:16px;background:#000;border:1px solid #d0d0d0"></div>
<div class="t" style="left:422px;top:628.538px;font-size:11.95px;height:17.925px;line-height:17.925px;color:#b4b4b4;">group2</div>
<div class="t" style="left:517px;top:629.872px;font-size:11.3px;height:16.95px;line-height:16.95px;color:#a8a8a8;">锁定格点</div>
<div class="t" style="left:580px;top:629.872px;font-size:11.3px;height:16.95px;line-height:16.95px;color:#a8a8a8;">正交</div>
<div class="t" style="left:620px;top:629.872px;font-size:11.3px;height:16.95px;line-height:16.95px;color:#a8a8a8;">平面模式</div>
<div class="abs " style="left:675px;top:626.5px;width:60px;height:19px;background:#1f1f1f"></div>
<div class="t" style="left:682.5px;top:629.872px;font-size:11.3px;height:16.95px;line-height:16.95px;color:#fff;font-weight:bold">物件锁点</div>
<div class="abs " style="left:738.5px;top:626.5px;width:60px;height:19px;background:#1f1f1f"></div>
<div class="t" style="left:746px;top:629.872px;font-size:11.3px;height:16.95px;line-height:16.95px;color:#fff;font-weight:bold">智慧轨迹</div>
<div class="t" style="left:809.5px;top:629.872px;font-size:11.3px;height:16.95px;line-height:16.95px;color:#a0a0a0;">操作轴 (工作平面)</div>
<div class="abs " style="left:910.5px;top:626.5px;width:76px;height:19px;background:#1f1f1f;overflow:hidden"><div class="t" style="left:27.5px;top:1px;font-size:11.3px;line-height:17px;color:#fff;font-weight:bold">自动对齐方式</div></div>
<svg class="abs" style="left:916.5px;top:630px;overflow:visible" width="12" height="14" viewBox="-6 -7 12 14"><rect x="-4" y="-.8" width="8" height="6.3" rx=".8" fill="#f4f4f4"/><path d="M-2.4 -.5V-3a2.4 2.4 0 0 1 4.8 0V-.5" fill="none" stroke="#f4f4f4" stroke-width="1.3"/></svg>
<div class="abs " style="left:986.8px;top:630.4px;width:13.2px;height:13px;background:#3a3a3a;border:2px solid #b4b4b4;border-right-width:5px"></div>
<div class="abs " style="left:1002.5px;top:631px;width:2px;height:2px;background:#999;border-radius:50%"></div>
<div class="abs " style="left:1002.5px;top:635px;width:2px;height:2px;background:#999;border-radius:50%"></div>
<div class="abs " style="left:1002.5px;top:639px;width:2px;height:2px;background:#999;border-radius:50%"></div>
<div class="abs " style="left:773.8px;top:78px;width:232.2px;height:544.5px;background:#323232;border-radius:5px 0 0 0"></div>
<div class="abs " style="left:773.8px;top:78px;width:232.2px;height:21px;background:#353535;border-radius:5px 0 0 0;border-bottom:1px solid #424242"></div>
<div class="t" style="left:779px;top:78.725px;font-size:13px;height:19.5px;line-height:19.5px;color:#707070;">显示</div>
<svg class="abs" style="left:986.75px;top:80.75px" width="14.5" height="14.5" viewBox="-10 -10 20 20"><rect x="-1.7" y="-8" width="3.4" height="4" rx=".6" fill="#c8c8c8" transform="rotate(0)"/><rect x="-1.7" y="-8" width="3.4" height="4" rx=".6" fill="#c8c8c8" transform="rotate(45)"/><rect x="-1.7" y="-8" width="3.4" height="4" rx=".6" fill="#c8c8c8" transform="rotate(90)"/><rect x="-1.7" y="-8" width="3.4" height="4" rx=".6" fill="#c8c8c8" transform="rotate(135)"/><rect x="-1.7" y="-8" width="3.4" height="4" rx=".6" fill="#c8c8c8" transform="rotate(180)"/><rect x="-1.7" y="-8" width="3.4" height="4" rx=".6" fill="#c8c8c8" transform="rotate(225)"/><rect x="-1.7" y="-8" width="3.4" height="4" rx=".6" fill="#c8c8c8" transform="rotate(270)"/><rect x="-1.7" y="-8" width="3.4" height="4" rx=".6" fill="#c8c8c8" transform="rotate(315)"/><circle r="4.4" fill="none" stroke="#c8c8c8" stroke-width="3"/></svg>
<div class="abs " style="left:965px;top:98px;width:19px;height:524px;background:#3c3c3c"></div>
<div class="abs " style="left:774px;top:609px;width:191px;height:13.5px;background:#3c3c3c"></div>
<div class="abs " style="left:969.5px;top:102px;width:8px;height:286px;background:#6d6d6d;border-radius:4px"></div>
<div class="abs " style="left:777px;top:612px;width:138px;height:8px;background:#6d6d6d;border-radius:4px"></div>
<div class="abs " style="left:984px;top:99px;width:19px;height:523.5px;background:#414141"></div>
<div class="abs " style="left:1003px;top:99px;width:3px;height:523.5px;background:#363636"></div>
<div class="abs " style="left:985.5px;top:172px;width:20.5px;height:36px;background:#323232;border-radius:6px 0 0 6px"></div>
<svg class="abs" style="left:987px;top:109px;overflow:visible" width="16" height="16" viewBox="-8 -8 16 16"><path d="M0.00 -5.20A5.2 5.2 0 0 1 3.80 -3.55" fill="none" stroke="#ff3030" stroke-width="2.6"/><path d="M3.68 -3.68A5.2 5.2 0 0 1 5.20 0.18" fill="none" stroke="#ff9a1f" stroke-width="2.6"/><path d="M5.20 0.00A5.2 5.2 0 0 1 3.55 3.80" fill="none" stroke="#ffe81f" stroke-width="2.6"/><path d="M3.68 3.68A5.2 5.2 0 0 1 -0.18 5.20" fill="none" stroke="#38d430" stroke-width="2.6"/><path d="M0.00 5.20A5.2 5.2 0 0 1 -3.80 3.55" fill="none" stroke="#20c8e8" stroke-width="2.6"/><path d="M-3.68 3.68A5.2 5.2 0 0 1 -5.20 -0.18" fill="none" stroke="#3048ff" stroke-width="2.6"/><path d="M-5.20 0.00A5.2 5.2 0 0 1 -3.55 -3.80" fill="none" stroke="#b030e8" stroke-width="2.6"/><path d="M-3.68 -3.68A5.2 5.2 0 0 1 0.18 -5.20" fill="none" stroke="#ff30a0" stroke-width="2.6"/><circle r="6.7" fill="none" stroke="#111" stroke-width=".6"/><circle r="3.7" fill="#222" stroke="#111" stroke-width=".6"/></svg>
<svg class="abs" style="left:987px;top:145px;overflow:visible" width="16" height="16" viewBox="-8 -8 16 16"><path d="M-6 1L0 4.5L6.5 1V3.5L0 7L-6 3.5z" fill="#3858e8" stroke="#111" stroke-width=".5"/><path d="M-6 -1.5L0 2L6.5 -1.5V1L0 4.5L-6 1z" fill="#f2f2f2" stroke="#111" stroke-width=".5"/><path d="M-6 -4.5L0 -7L6.5 -4.5V-1.5L0 2L-6 -1.5z" fill="#f04020" stroke="#111" stroke-width=".5"/><path d="M-6 -4.5L0 -7L6.5 -4.5L0 -1.5z" fill="#ff7a50" stroke="#111" stroke-width=".4"/></svg>
<svg class="abs" style="left:987px;top:180px;overflow:visible" width="16" height="16" viewBox="-8 -8 16 16"><rect x="-6.5" y="-6" width="13" height="10.5" fill="#d9d9d9" stroke="#f6f6f6" stroke-width="1.2"/><path d="M-4 6.2H4" stroke="#111" stroke-width="1.6"/><rect x="-6.5" y="3" width="13" height="1.5" fill="#aaa"/></svg>
<svg class="abs" style="left:987px;top:217.5px;overflow:visible" width="16" height="16" viewBox="-8 -8 16 16"><rect x="-6.5" y="-6.5" width="13" height="13" fill="#3a5ae8" stroke="#e8e8e8" stroke-width="1"/><rect x="-6.5" y="-6.5" width="13" height="2.4" fill="#e8e8e8"/><ellipse cx="0" cy="1.5" rx="4.3" ry="3.8" fill="#fff"/><text x="0" y="4.3" font-size="7.5" font-weight="bold" text-anchor="middle" fill="#2a48d8" font-family="Liberation Sans,sans-serif">?</text></svg>
<svg class="abs" style="left:988px;top:252px;overflow:visible" width="14" height="18" viewBox="-7 -9 14 18"><path d="M-5 -7.5H2.5L5.5 -4.5V7.5H-5z" fill="#f4f4f4"/><path d="M2.5 -7.5V-4.5H5.5z" fill="#bdbdbd"/><path d="M-5 -1.5H5.5M.2 -7V7.5" stroke="#d2d2d2" stroke-width=".7"/></svg>
<div class="t" style="left:795.3px;top:105.992px;font-size:12.9px;height:19.35px;line-height:19.35px;color:#e6e6e6;">工作视窗设置</div>
<div class="t" style="left:814.5px;top:128.475px;font-size:11px;height:16.5px;line-height:16.5px;color:#e6e6e6;">使用中的工作视窗:</div>
<div class="t" style="left:916.7px;top:127.95px;font-size:11px;height:16.5px;line-height:16.5px;color:#e6e6e6;">Top</div>
<div class="t" style="left:860px;top:151.675px;font-size:11px;height:16.5px;line-height:16.5px;color:#e6e6e6;">显示模式:</div>
<div class="abs " style="left:916px;top:151.5px;width:49px;height:15.5px;background:#5e5e5e;border-radius:4px 0 0 4px;overflow:hidden"><div class="t" style="left:7px;top:0;font-size:11.5px;line-height:15.5px;color:#f0f0f0">Wireframe</div></div>
<div class="t" style="left:796.5px;top:180.075px;font-size:11px;height:16.5px;line-height:16.5px;color:#e6e6e6;">背景</div>
<div class="abs " style="left:827px;top:179.5px;width:92px;height:15.5px;background:#5e5e5e;border-radius:4px"></div>
<div class="t" style="left:833.5px;top:179.875px;font-size:11px;height:16.5px;line-height:16.5px;color:#f4f4f4;font-weight:500">使用程序设置</div>
<svg class="abs" style="left:907px;top:181.3px;overflow:visible" width="8" height="12" viewBox="-4 -6 8 12"><path d="M-2.2 -1.6L0 -3.8L2.2 -1.6M-2.2 1.6L0 3.8L2.2 1.6" fill="none" stroke="#f0f0f0" stroke-width="1.2" stroke-linecap="round" stroke-linejoin="round"/></svg>
<div class="t" style="left:795.3px;top:203.992px;font-size:12.9px;height:19.35px;line-height:19.35px;color:#e6e6e6;">常规设定</div>
<div class="abs" style="left:774px;top:98px;width:191px;height:511px;overflow:hidden"><div style="position:absolute;left:-774px;top:-98px"><div class="abs " style="left:813.5px;top:240.7px;width:11.5px;height:11.5px;border-radius:2.5px;background:#474747"></div><div class="t" style="left:829.7px;top:238.975px;font-size:11px;height:16.5px;line-height:16.5px;color:#5e5e5e;">平坦着色</div><div class="abs " style="left:813.5px;top:261.3px;width:11.5px;height:11.5px;border-radius:2.5px;background:#474747"></div><div class="t" style="left:829.7px;top:259.575px;font-size:11px;height:16.5px;line-height:16.5px;color:#5e5e5e;">著色頂點色</div><div class="abs " style="left:813.5px;top:282.7px;width:11.5px;height:11.5px;border-radius:2.5px;background:#474747"></div><div class="t" style="left:829.7px;top:280.975px;font-size:11px;height:16.5px;line-height:16.5px;color:#5e5e5e;">阴影</div><div class="abs " style="left:813.5px;top:304.2px;width:11.5px;height:11.5px;border-radius:2.5px;background:linear-gradient(#6a6a6a,#5a5a5a)"><svg width="11.5" height="11.5" viewBox="0 0 11.5 11.5" style="display:block"><path d="M2.8 6 L4.9 8.3 L8.7 3" fill="none" stroke="#fff" stroke-width="1.5" stroke-linecap="round" stroke-linejoin="round"/></svg></div><div class="t" style="left:829.7px;top:302.475px;font-size:11px;height:16.5px;line-height:16.5px;color:#f0f0f0;font-weight:500">曲面结构线</div><div class="abs " style="left:813.5px;top:325.1px;width:11.5px;height:11.5px;border-radius:2.5px;background:linear-gradient(#6a6a6a,#5a5a5a)"><svg width="11.5" height="11.5" viewBox="0 0 11.5 11.5" style="display:block"><path d="M2.8 6 L4.9 8.3 L8.7 3" fill="none" stroke="#fff" stroke-width="1.5" stroke-linecap="round" stroke-linejoin="round"/></svg></div><div class="t" style="left:829.7px;top:323.375px;font-size:11px;height:16.5px;line-height:16.5px;color:#f0f0f0;font-weight:500">曲面边缘</div><div class="abs " style="left:813.5px;top:345.9px;width:11.5px;height:11.5px;border-radius:2.5px;background:linear-gradient(#6a6a6a,#5a5a5a)"><svg width="11.5" height="11.5" viewBox="0 0 11.5 11.5" style="display:block"><path d="M2.8 6 L4.9 8.3 L8.7 3" fill="none" stroke="#fff" stroke-width="1.5" stroke-linecap="round" stroke-linejoin="round"/></svg></div><div class="t" style="left:829.7px;top:344.175px;font-size:11px;height:16.5px;line-height:16.5px;color:#f0f0f0;font-weight:500">正切边缘</div><div class="abs " style="left:813.5px;top:366.8px;width:11.5px;height:11.5px;border-radius:2.5px;background:linear-gradient(#6a6a6a,#5a5a5a)"><svg width="11.5" height="11.5" viewBox="0 0 11.5 11.5" style="display:block"><path d="M2.8 6 L4.9 8.3 L8.7 3" fill="none" stroke="#fff" stroke-width="1.5" stroke-linecap="round" stroke-linejoin="round"/></svg></div><div class="t" style="left:829.7px;top:365.075px;font-size:11px;height:16.5px;line-height:16.5px;color:#f0f0f0;font-weight:500">正切接缝</div><div class="abs " style="left:813.5px;top:388px;width:11.5px;height:11.5px;border-radius:2.5px;background:linear-gradient(#6a6a6a,#5a5a5a)"><svg width="11.5" height="11.5" viewBox="0 0 11.5 11.5" style="display:block"><path d="M2.8 6 L4.9 8.3 L8.7 3" fill="none" stroke="#fff" stroke-width="1.5" stroke-linecap="round" stroke-linejoin="round"/></svg></div><div class="t" style="left:829.7px;top:386.275px;font-size:11px;height:16.5px;line-height:16.5px;color:#f0f0f0;font-weight:500">细分锐边</div><div class="abs " style="left:813.5px;top:411.7px;width:11.5px;height:11.5px;border-radius:2.5px;background:linear-gradient(#6a6a6a,#5a5a5a)"><svg width="11.5" height="11.5" viewBox="0 0 11.5 11.5" style="display:block"><path d="M2.8 6 L4.9 8.3 L8.7 3" fill="none" stroke="#fff" stroke-width="1.5" stroke-linecap="round" stroke-linejoin="round"/></svg></div><div class="t" style="left:829.7px;top:409.975px;font-size:11px;height:16.5px;line-height:16.5px;color:#f0f0f0;font-weight:500">细分线框</div><div class="abs " style="left:813.5px;top:435.1px;width:11.5px;height:11.5px;border-radius:2.5px;background:linear-gradient(#6a6a6a,#5a5a5a)"><svg width="11.5" height="11.5" viewBox="0 0 11.5 11.5" style="display:block"><path d="M2.8 6 L4.9 8.3 L8.7 3" fill="none" stroke="#fff" stroke-width="1.5" stroke-linecap="round" stroke-linejoin="round"/></svg></div><div class="t" style="left:829.7px;top:433.375px;font-size:11px;height:16.5px;line-height:16.5px;color:#f0f0f0;font-weight:500">细分边界</div><div class="abs " style="left:813.5px;top:456.9px;width:11.5px;height:11.5px;border-radius:2.5px;background:linear-gradient(#6a6a6a,#5a5a5a)"><svg width="11.5" height="11.5" viewBox="0 0 11.5 11.5" style="display:block"><path d="M2.8 6 L4.9 8.3 L8.7 3" fill="none" stroke="#fff" stroke-width="1.5" stroke-linecap="round" stroke-linejoin="round"/></svg></div><div class="t" style="left:829.7px;top:455.175px;font-size:11px;height:16.5px;line-height:16.5px;color:#f0f0f0;font-weight:500">细分对称</div><div class="abs " style="left:813.5px;top:478.6px;width:11.5px;height:11.5px;border-radius:2.5px;background:linear-gradient(#6a6a6a,#5a5a5a)"><svg width="11.5" height="11.5" viewBox="0 0 11.5 11.5" style="display:block"><path d="M2.8 6 L4.9 8.3 L8.7 3" fill="none" stroke="#fff" stroke-width="1.5" stroke-linecap="round" stroke-linejoin="round"/></svg></div><div class="t" style="left:829.7px;top:476.875px;font-size:11px;height:16.5px;line-height:16.5px;color:#f0f0f0;font-weight:500">网格框线</div><div class="abs " style="left:813.5px;top:500.3px;width:11.5px;height:11.5px;border-radius:2.5px;background:linear-gradient(#6a6a6a,#5a5a5a)"><svg width="11.5" height="11.5" viewBox="0 0 11.5 11.5" style="display:block"><path d="M2.8 6 L4.9 8.3 L8.7 3" fill="none" stroke="#fff" stroke-width="1.5" stroke-linecap="round" stroke-linejoin="round"/></svg></div><div class="t" style="left:829.7px;top:498.575px;font-size:11px;height:16.5px;line-height:16.5px;color:#f0f0f0;font-weight:500">曲线</div><div class="abs " style="left:813.5px;top:521.3px;width:11.5px;height:11.5px;border-radius:2.5px;background:#474747"></div><div class="t" style="left:829.7px;top:519.575px;font-size:11px;height:16.5px;line-height:16.5px;color:#5e5e5e;">隐藏线</div><div class="abs " style="left:813.5px;top:542.3px;width:11.5px;height:11.5px;border-radius:2.5px;background:#474747"></div><div class="t" style="left:829.7px;top:540.575px;font-size:11px;height:16.5px;line-height:16.5px;color:#5e5e5e;">边缘</div><div class="abs " style="left:813.5px;top:563.3px;width:11.5px;height:11.5px;border-radius:2.5px;background:#474747"></div><div class="t" style="left:829.7px;top:561.575px;font-size:11px;height:16.5px;line-height:16.5px;color:#5e5e5e;">轮廓线</div><div class="abs " style="left:813.5px;top:583.8px;width:11.5px;height:11.5px;border-radius:2.5px;background:#474747"></div><div class="t" style="left:829.7px;top:582.075px;font-size:11px;height:16.5px;line-height:16.5px;color:#5e5e5e;">锐边</div><div class="abs " style="left:813.5px;top:602.1px;width:11.5px;height:11.5px;border-radius:2.5px;background:#474747"></div><div class="t" style="left:829.7px;top:600.375px;font-size:11px;height:16.5px;line-height:16.5px;color:#5e5e5e;">接缝</div></div></div></div></body></html>
